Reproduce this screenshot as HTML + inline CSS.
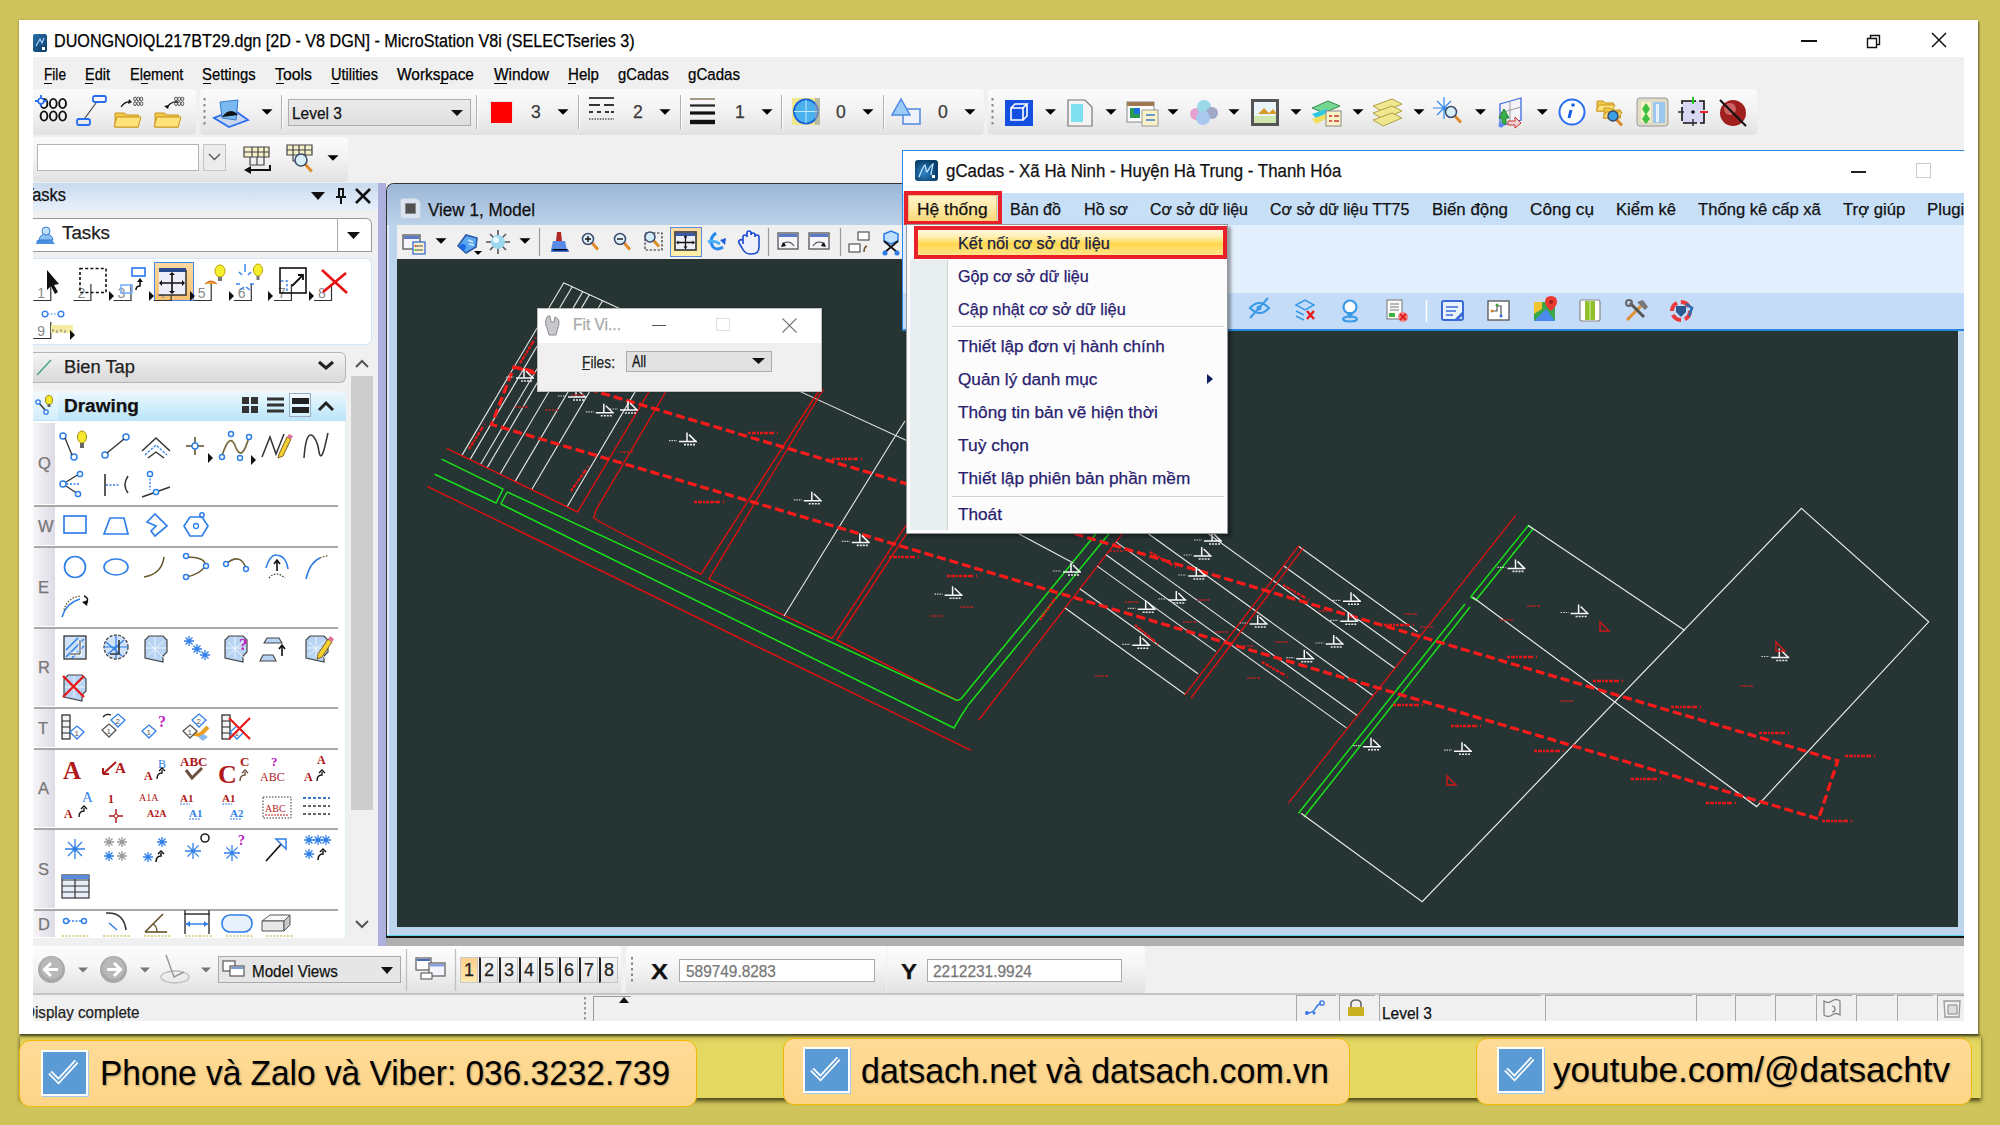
<!DOCTYPE html><html><head><meta charset="utf-8"><style>
html,body{margin:0;padding:0;}
body{width:2000px;height:1125px;position:relative;overflow:hidden;background:#cfc45b;font-family:"Liberation Sans",sans-serif;}
.r{position:absolute;box-sizing:border-box;}
.t{position:absolute;white-space:nowrap;line-height:1;}
svg.r{overflow:visible;}
</style></head><body>
<div class="r" style="left:20px;top:1034px;width:1961px;height:64px;background:#e3d862;box-shadow:inset 0 7px 6px -5px rgba(70,60,0,.55),0 3px 4px rgba(30,28,0,.75);"></div>
<div class="r" style="left:19px;top:20px;width:1959px;height:1014px;background:#fff;box-shadow:1px 2px 2px rgba(0,0,0,.55),-1px 0 2px rgba(0,0,0,.15);"></div>
<div class="r" style="left:33px;top:34px;width:14px;height:18px;background:linear-gradient(135deg,#2a6fa8,#0b3a66);border-radius:2px;"></div>
<div class="t" style="left:54.00px;top:31.64px;font-size:18.15px;color:#000;font-weight:400;font-family:'Liberation Sans',sans-serif;transform:scaleX(0.8903);transform-origin:0 0;-webkit-text-stroke:0.25px currentColor;">DUONGNOIQL217BT29.dgn [2D - V8 DGN] - MicroStation V8i (SELECTseries 3)</div>
<div class="r" style="left:33px;top:57px;width:1931px;height:964px;background:#f0f0f0;"></div>
<div class="r" style="left:1801px;top:40px;width:16px;height:2px;background:#111;"></div>
<svg class="r" style="left:1864px;top:31px;" width="20" height="20" viewBox="0 0 20 20"><path d="M3.5 7.5h9v9h-9z M6.5 7.5v-3h9v9h-3" fill="none" stroke="#111" stroke-width="1.4"/></svg>
<svg class="r" style="left:1929px;top:30px;" width="20" height="20" viewBox="0 0 20 20"><path d="M3 3L17 17M17 3L3 17" stroke="#111" stroke-width="1.5"/></svg>
<svg class="r" style="left:33px;top:34px;" width="14" height="18" viewBox="0 0 14 18"><path d="M3 12 L7 5 L9 9 L11 4" stroke="#9fd3ff" stroke-width="1.2" fill="none"/><rect x="9" y="13" width="3" height="3" fill="#fff"/></svg>
<div class="t" style="left:43.60px;top:66.50px;font-size:15.95px;color:#000;font-weight:400;font-family:'Liberation Sans',sans-serif;transform:scaleX(0.8560);transform-origin:0 0;-webkit-text-stroke:0.25px currentColor;">File</div>
<div class="t" style="left:85.00px;top:66.50px;font-size:15.95px;color:#000;font-weight:400;font-family:'Liberation Sans',sans-serif;transform:scaleX(0.9095);transform-origin:0 0;-webkit-text-stroke:0.25px currentColor;">Edit</div>
<div class="t" style="left:129.60px;top:66.50px;font-size:15.95px;color:#000;font-weight:400;font-family:'Liberation Sans',sans-serif;transform:scaleX(0.9126);transform-origin:0 0;-webkit-text-stroke:0.25px currentColor;">Element</div>
<div class="t" style="left:202.40px;top:66.50px;font-size:15.95px;color:#000;font-weight:400;font-family:'Liberation Sans',sans-serif;transform:scaleX(0.9300);transform-origin:0 0;-webkit-text-stroke:0.25px currentColor;">Settings</div>
<div class="t" style="left:275.00px;top:66.50px;font-size:15.95px;color:#000;font-weight:400;font-family:'Liberation Sans',sans-serif;transform:scaleX(0.9937);transform-origin:0 0;-webkit-text-stroke:0.25px currentColor;">Tools</div>
<div class="t" style="left:331.00px;top:66.50px;font-size:15.95px;color:#000;font-weight:400;font-family:'Liberation Sans',sans-serif;transform:scaleX(0.9144);transform-origin:0 0;-webkit-text-stroke:0.25px currentColor;">Utilities</div>
<div class="t" style="left:397.00px;top:66.50px;font-size:15.95px;color:#000;font-weight:400;font-family:'Liberation Sans',sans-serif;transform:scaleX(0.9687);transform-origin:0 0;-webkit-text-stroke:0.25px currentColor;">Workspace</div>
<div class="t" style="left:494.00px;top:66.50px;font-size:15.95px;color:#000;font-weight:400;font-family:'Liberation Sans',sans-serif;transform:scaleX(0.9695);transform-origin:0 0;-webkit-text-stroke:0.25px currentColor;">Window</div>
<div class="t" style="left:568.00px;top:66.50px;font-size:15.95px;color:#000;font-weight:400;font-family:'Liberation Sans',sans-serif;transform:scaleX(0.9450);transform-origin:0 0;-webkit-text-stroke:0.25px currentColor;">Help</div>
<div class="t" style="left:618.00px;top:66.50px;font-size:15.95px;color:#000;font-weight:400;font-family:'Liberation Sans',sans-serif;transform:scaleX(0.9276);transform-origin:0 0;-webkit-text-stroke:0.25px currentColor;">gCadas</div>
<div class="t" style="left:688.00px;top:66.50px;font-size:15.95px;color:#000;font-weight:400;font-family:'Liberation Sans',sans-serif;transform:scaleX(0.9458);transform-origin:0 0;-webkit-text-stroke:0.25px currentColor;">gCadas</div>
<div class="r" style="left:44px;top:83px;width:8px;height:1px;background:#000;"></div>
<div class="r" style="left:85px;top:83px;width:8px;height:1px;background:#000;"></div>
<div class="r" style="left:141px;top:83px;width:7px;height:1px;background:#000;"></div>
<div class="r" style="left:203px;top:83px;width:8px;height:1px;background:#000;"></div>
<div class="r" style="left:276px;top:83px;width:8px;height:1px;background:#000;"></div>
<div class="r" style="left:331px;top:83px;width:8px;height:1px;background:#000;"></div>
<div class="r" style="left:440px;top:83px;width:8px;height:1px;background:#000;"></div>
<div class="r" style="left:494px;top:83px;width:13px;height:1px;background:#000;"></div>
<div class="r" style="left:568px;top:83px;width:8px;height:1px;background:#000;"></div>
<div class="r" style="left:33px;top:89px;width:163px;height:46px;background:linear-gradient(#fbfbfb 0%,#f3f3f3 45%,#e2e2e2 100%);border-radius:4px;"></div>
<div class="r" style="left:200px;top:89px;width:784px;height:46px;background:linear-gradient(#fbfbfb 0%,#f3f3f3 45%,#e2e2e2 100%);border-radius:4px;"></div>
<div class="r" style="left:988px;top:89px;width:769px;height:46px;background:linear-gradient(#fbfbfb 0%,#f3f3f3 45%,#e2e2e2 100%);border-radius:4px;"></div>
<div class="r" style="left:33px;top:137px;width:315px;height:45px;background:linear-gradient(#fbfbfb 0%,#f3f3f3 45%,#e2e2e2 100%);border-radius:4px;"></div>
<svg class="r" style="left:0px;top:0px;left:0;top:0;" width="2000" height="140" viewBox="0 0 2000 140"><rect x="203.5" y="98" width="2" height="2.5" fill="#888"/><rect x="203.5" y="104" width="2" height="2.5" fill="#888"/><rect x="203.5" y="110" width="2" height="2.5" fill="#888"/><rect x="203.5" y="116" width="2" height="2.5" fill="#888"/><rect x="203.5" y="122" width="2" height="2.5" fill="#888"/><rect x="991.5" y="98" width="2" height="2.5" fill="#888"/><rect x="991.5" y="104" width="2" height="2.5" fill="#888"/><rect x="991.5" y="110" width="2" height="2.5" fill="#888"/><rect x="991.5" y="116" width="2" height="2.5" fill="#888"/><rect x="991.5" y="122" width="2" height="2.5" fill="#888"/><path d="M281.5 95V129" stroke="#b0b0b0" stroke-width="1"/><path d="M282.5 95V129" stroke="#fff" stroke-width="1"/><path d="M476.5 95V129" stroke="#b0b0b0" stroke-width="1"/><path d="M477.5 95V129" stroke="#fff" stroke-width="1"/><path d="M578.5 95V129" stroke="#b0b0b0" stroke-width="1"/><path d="M579.5 95V129" stroke="#fff" stroke-width="1"/><path d="M680.5 95V129" stroke="#b0b0b0" stroke-width="1"/><path d="M681.5 95V129" stroke="#fff" stroke-width="1"/><path d="M781.5 95V129" stroke="#b0b0b0" stroke-width="1"/><path d="M782.5 95V129" stroke="#fff" stroke-width="1"/><path d="M883.5 95V129" stroke="#b0b0b0" stroke-width="1"/><path d="M884.5 95V129" stroke="#fff" stroke-width="1"/><ellipse cx="44.0" cy="103.5" rx="3.4" ry="4.6" fill="none" stroke="#111" stroke-width="1.9"/><ellipse cx="44.0" cy="116.0" rx="3.4" ry="4.6" fill="none" stroke="#111" stroke-width="1.9"/><ellipse cx="53.3" cy="103.5" rx="3.4" ry="4.6" fill="none" stroke="#111" stroke-width="1.9"/><ellipse cx="53.3" cy="116.0" rx="3.4" ry="4.6" fill="none" stroke="#111" stroke-width="1.9"/><ellipse cx="62.6" cy="103.5" rx="3.4" ry="4.6" fill="none" stroke="#111" stroke-width="1.9"/><ellipse cx="62.6" cy="116.0" rx="3.4" ry="4.6" fill="none" stroke="#111" stroke-width="1.9"/><path d="M35 101h12M41 95v12" stroke="#2a6ef0" stroke-width="1.8"/><circle cx="41" cy="101" r="2.8" fill="#fff" stroke="#2a6ef0" stroke-width="1.6"/><rect x="93" y="96" width="13" height="6" rx="2" fill="none" stroke="#2a6ef0" stroke-width="1.8"/><rect x="77" y="119" width="13" height="6" rx="2" fill="none" stroke="#2a6ef0" stroke-width="1.8"/><path d="M85 118L96 103" stroke="#444" stroke-width="1.2"/><path d="M115 113h9.600000000000001l2 2h12.0v12h-23.6z" fill="#f2c64a" stroke="#c8961e" stroke-width="1"/><path d="M117 117h24l-3 10h-24z" fill="#ffe27a" stroke="#c8961e" stroke-width="1"/><ellipse cx="135.0" cy="99.0" rx="1.4" ry="1.9" fill="none" stroke="#333" stroke-width="0.81"/><ellipse cx="138.2" cy="99.0" rx="1.4" ry="1.9" fill="none" stroke="#333" stroke-width="0.81"/><ellipse cx="141.4" cy="99.0" rx="1.4" ry="1.9" fill="none" stroke="#333" stroke-width="0.81"/><ellipse cx="135.0" cy="103.7" rx="1.4" ry="1.9" fill="none" stroke="#333" stroke-width="0.81"/><ellipse cx="138.2" cy="103.7" rx="1.4" ry="1.9" fill="none" stroke="#333" stroke-width="0.81"/><ellipse cx="141.4" cy="103.7" rx="1.4" ry="1.9" fill="none" stroke="#333" stroke-width="0.81"/><path d="M121 107Q125 101 131 102" stroke="#111" stroke-width="1.3" fill="none"/><path d="M129 99l3 3l-4 2z" fill="#111"/><path d="M155 113h9.600000000000001l2 2h12.0v12h-23.6z" fill="#f2c64a" stroke="#c8961e" stroke-width="1"/><path d="M157 117h24l-3 10h-24z" fill="#ffe27a" stroke="#c8961e" stroke-width="1"/><ellipse cx="176.0" cy="99.0" rx="1.4" ry="1.9" fill="none" stroke="#333" stroke-width="0.81"/><ellipse cx="179.2" cy="99.0" rx="1.4" ry="1.9" fill="none" stroke="#333" stroke-width="0.81"/><ellipse cx="182.4" cy="99.0" rx="1.4" ry="1.9" fill="none" stroke="#333" stroke-width="0.81"/><ellipse cx="176.0" cy="103.7" rx="1.4" ry="1.9" fill="none" stroke="#333" stroke-width="0.81"/><ellipse cx="179.2" cy="103.7" rx="1.4" ry="1.9" fill="none" stroke="#333" stroke-width="0.81"/><ellipse cx="182.4" cy="103.7" rx="1.4" ry="1.9" fill="none" stroke="#333" stroke-width="0.81"/><path d="M178 102Q170 101 167 108" stroke="#111" stroke-width="1.3" fill="none"/><path d="M164 106l4 3l1-4z" fill="#111"/><path d="M214 118L229 127L248 120L234 110z" fill="#c9d8ee" stroke="#2a6ef0" stroke-width="1.8"/><path d="M220 102L238 100L236 120L222 118z" fill="#7ab8f0" stroke="#3a7ad0" stroke-width="1"/><path d="M222 117Q230 106 238 115z" fill="#111"/><path d="M261.5 109.2h11l-5.5 5.5z" fill="#000"/><path d="M557.5 109.2h11l-5.5 5.5z" fill="#000"/><path d="M659.5 109.2h11l-5.5 5.5z" fill="#000"/><path d="M761.5 109.2h11l-5.5 5.5z" fill="#000"/><path d="M862.5 109.2h11l-5.5 5.5z" fill="#000"/><path d="M964.5 109.2h11l-5.5 5.5z" fill="#000"/><path d="M1045.0 109.2h11l-5.5 5.5z" fill="#000"/><path d="M1105.5 109.2h11l-5.5 5.5z" fill="#000"/><path d="M1167.5 109.2h11l-5.5 5.5z" fill="#000"/><path d="M1228.5 109.2h11l-5.5 5.5z" fill="#000"/><path d="M1290.5 109.2h11l-5.5 5.5z" fill="#000"/><path d="M1352.5 109.2h11l-5.5 5.5z" fill="#000"/><path d="M1413.5 109.2h11l-5.5 5.5z" fill="#000"/><path d="M1475.0 109.2h11l-5.5 5.5z" fill="#000"/><path d="M1536.9 109.2h11l-5.5 5.5z" fill="#000"/></svg>
<div class="r" style="left:288px;top:99px;width:183px;height:27px;background:linear-gradient(#ececec,#dedede);border:1px solid #adadad;"></div>
<div class="t" style="left:292.00px;top:104.57px;font-size:17.05px;color:#111;font-weight:400;font-family:'Liberation Sans',sans-serif;transform:scaleX(0.9094);transform-origin:0 0;-webkit-text-stroke:0.25px currentColor;">Level 3</div>
<svg class="r" style="left:451px;top:110px;" width="12" height="6" viewBox="0 0 12 6"><path d="M0 0H12L6 6z" fill="#111"/></svg>
<div class="r" style="left:490px;top:101px;width:23px;height:23px;background:#f00;border:1px solid #e8e8e8;"></div>
<div class="t" style="left:531.00px;top:104.10px;font-size:17.6px;color:#3a3a3a;font-weight:400;font-family:'Liberation Sans',sans-serif;-webkit-text-stroke:0.25px currentColor;">3</div>
<div class="t" style="left:633.00px;top:104.10px;font-size:17.6px;color:#3a3a3a;font-weight:400;font-family:'Liberation Sans',sans-serif;-webkit-text-stroke:0.25px currentColor;">2</div>
<div class="t" style="left:735.00px;top:104.10px;font-size:17.6px;color:#3a3a3a;font-weight:400;font-family:'Liberation Sans',sans-serif;-webkit-text-stroke:0.25px currentColor;">1</div>
<div class="t" style="left:836.00px;top:104.10px;font-size:17.6px;color:#3a3a3a;font-weight:400;font-family:'Liberation Sans',sans-serif;-webkit-text-stroke:0.25px currentColor;">0</div>
<div class="t" style="left:938.00px;top:104.10px;font-size:17.6px;color:#3a3a3a;font-weight:400;font-family:'Liberation Sans',sans-serif;-webkit-text-stroke:0.25px currentColor;">0</div>
<svg class="r" style="left:0px;top:0px;left:0;top:0;" width="2000" height="190" viewBox="0 0 2000 190"><path d="M589 98h25" stroke="#333" stroke-width="1.8"/><path d="M589 105h11M604 105h10" stroke="#333" stroke-width="1.8"/><path d="M589 112h4M597 112h4M605 112h4M611 112h3" stroke="#333" stroke-width="1.8"/><path d="M589 119h25" stroke="#555" stroke-width="1.5" stroke-dasharray="1.5 1.2"/><path d="M690 99h25" stroke="#6a5a3a" stroke-width="1.2"/><path d="M690 105.5h25" stroke="#222" stroke-width="2.2"/><path d="M690 113h25" stroke="#111" stroke-width="3.2"/><path d="M690 122h25" stroke="#111" stroke-width="4.4"/><rect x="792" y="98" width="28" height="27" fill="#efe78c"/><circle cx="806" cy="111.5" r="12" fill="#4ab0ee" stroke="#1a62d8" stroke-width="2"/><path d="M806 100v23M794 111.5h24" stroke="#bfeaff" stroke-width="1"/><rect x="815" y="98" width="5" height="27" fill="#9aa0b0" opacity=".6"/><rect x="903" y="109" width="17" height="15" fill="#eef3fb" stroke="#5a8ee0" stroke-width="1.6"/><path d="M901 99L910 115H892z" fill="#9ccaf6" stroke="#4a8ae6" stroke-width="1.5"/><rect x="1005" y="100" width="28" height="26" fill="#1450e0"/><path d="M1011 108h12v12h-12z M1011 108l4-4h12l-4 4 M1023 120l4-4V104" fill="none" stroke="#fff" stroke-width="1.6"/><path d="M1068 100h17l7 7v19h-24z" fill="#f4f4f4" stroke="#777" stroke-width="1.2"/><path d="M1071 104h12v18h-12z" fill="#7fe0f0"/><rect x="1127" y="102" width="27" height="20" fill="#fdfdfd" stroke="#888" stroke-width="1"/><rect x="1127" y="102" width="27" height="4" fill="#a07850"/><rect x="1130" y="108" width="10" height="10" fill="#2a9a50"/><rect x="1134" y="108" width="6" height="6" fill="#1a70e0"/><rect x="1142" y="110" width="16" height="16" fill="#fbf3c8" stroke="#999" stroke-width="1"/><path d="M1146 115h9M1146 120h9" stroke="#3a7ad0" stroke-width="1.5"/><circle cx="1196" cy="114" r="6" fill="#e6a0d0"/><circle cx="1204" cy="107" r="7" fill="#9ad8e8"/><circle cx="1212" cy="113" r="6" fill="#a0a8c8"/><circle cx="1203" cy="118" r="7" fill="#a8c8f0"/><rect x="1251" y="99" width="28" height="27" fill="#555"/><path d="M1254 102h22v21h-22z" fill="#e8f4f8"/><path d="M1258 114l6-6l5 5l4-4l4 5z" fill="#d89a2a"/><path d="M1254 116h22v7h-22z" fill="#d0e8b0"/><path d="M1312 108L1328 101L1340 106L1324 113z" fill="#72d890" stroke="#3a8a50" stroke-width="1"/><path d="M1312 114L1326 109L1330 112L1316 118z" fill="#30c8e0"/><path d="M1312 119L1326 114L1330 117L1316 124z" fill="#f0e060"/><rect x="1326" y="111" width="15" height="15" fill="#fbf3c8" stroke="#888" stroke-width="1"/><path d="M1329 116h3M1334 116h5M1329 121h3M1334 121h5" stroke="#c33" stroke-width="1.5"/><path d="M1373 106L1392 99L1402 104L1383 112z" fill="#f0e890" stroke="#b0a040" stroke-width="1"/><path d="M1373 113L1392 106L1402 111L1383 119z" fill="#f0e890" stroke="#b0a040" stroke-width="1"/><path d="M1373 120L1392 113L1402 118L1383 126z" fill="#f0e890" stroke="#b0a040" stroke-width="1"/><path d="M1444 97v22M1433 108h22M1437 101l14 14M1451 101l-14 14" stroke="#2a8af0" stroke-width="1.2"/><line x1="1454.8" y1="115.8" x2="1460.9" y2="122.5" stroke="#e08a2a" stroke-width="3"/><circle cx="1451" cy="112" r="5.5" fill="#d8eef8" stroke="#3a4a6a" stroke-width="1.5"/><path d="M1500 104L1521 98V120L1500 126z" fill="#f4f4f8" stroke="#3a6ae0" stroke-width="1.3"/><path d="M1510 101v22M1500 113l21-6" stroke="#999" stroke-width="1"/><path d="M1499 118l5-9l5 9h-3v6h-4v-6z" fill="#3ab04a" stroke="#1a7a2a" stroke-width="1"/><path d="M1508 121h7l0-4l6 6l-6 5v-3h-7z" fill="#f0d0d0" stroke="#c33" stroke-width="1"/><circle cx="1501" cy="125" r="2.5" fill="#5a8af0"/><circle cx="1572" cy="112" r="12.5" fill="#fff" stroke="#2a6ef0" stroke-width="2"/><path d="M1571 110l-2 8" stroke="#1a5ae0" stroke-width="3"/><circle cx="1573" cy="105" r="1.8" fill="#1a5ae0"/><path d="M1597 101h6.4l2 2h8.0v8h-16.4z" fill="#f2c64a" stroke="#c8961e" stroke-width="1"/><path d="M1599 105h16l-3 6h-16z" fill="#ffe27a" stroke="#c8961e" stroke-width="1"/><path d="M1604 108h6.4l2 2h8.0v8h-16.4z" fill="#f2c64a" stroke="#c8961e" stroke-width="1"/><path d="M1606 112h16l-3 6h-16z" fill="#ffe27a" stroke="#c8961e" stroke-width="1"/><line x1="1616.5" y1="119.5" x2="1622.0" y2="125.5" stroke="#e08a2a" stroke-width="3"/><circle cx="1613" cy="116" r="5" fill="#3aa0e8" stroke="#3a4a6a" stroke-width="1.5"/><rect x="1637" y="98" width="31" height="28" rx="3" fill="#e0dcc8" stroke="#999" stroke-width="1"/><path d="M1641 102h10v20h-10z" fill="#f8f2c8"/><path d="M1646 103l-4 6l4 6l4-6z M1646 113l-4 6l4 5l4-5z" fill="#40c040"/><rect x="1653" y="102" width="12" height="21" fill="#9cc8f0"/><rect x="1656" y="104" width="3" height="18" fill="#e8f2fc"/><rect x="1682" y="101" width="22" height="22" fill="#d8d8f4" stroke="#111" stroke-width="1.6" stroke-dasharray="14 3"/><path d="M1693 97v7" stroke="#2c2" stroke-width="2"/><path d="M1700 112h8" stroke="#e22" stroke-width="2"/><path d="M1678 112h6M1693 119v7" stroke="#333" stroke-width="1.5"/><circle cx="1693" cy="112" r="1.8" fill="#111"/><circle cx="1733" cy="113" r="13" fill="#a02020"/><circle cx="1730" cy="109" r="6" fill="#e08080" opacity=".7"/><path d="M1720 100L1746 126" stroke="#111" stroke-width="2.2"/><path d="M244 147h25v10h-25z" fill="#f4f0c8" stroke="#444" stroke-width="1.2"/><path d="M250 157v8h14v-8M252 147v10M258 147v10M264 147v10M244 152h25M257 157v8" stroke="#444" stroke-width="1.2" fill="none"/><path d="M270 165v5h-20" stroke="#111" stroke-width="2" fill="none"/><path d="M244 170l7-4v8z" fill="#111"/><path d="M287 145h25v10h-25z" fill="#f4f0c8" stroke="#444" stroke-width="1.2"/><path d="M293 145v10M299 145v10M305 145v10M287 150h25M293 155v6h6" stroke="#444" stroke-width="1.2" fill="none"/><line x1="305.2" y1="164.2" x2="311.8" y2="171.4" stroke="#e08a2a" stroke-width="3"/><circle cx="301" cy="160" r="6" fill="#d8eef8" stroke="#3a4a6a" stroke-width="1.5"/><path d="M327.5 155.2h11l-5.5 5.5z" fill="#000"/></svg>
<div class="r" style="left:37px;top:144px;width:162px;height:27px;background:#fff;border:1px solid #b4b4b4;"></div>
<div class="r" style="left:203px;top:144px;width:23px;height:27px;background:#ececec;border:1px solid #c4c4c4;"></div>
<svg class="r" style="left:208px;top:153px;" width="13" height="8" viewBox="0 0 13 8"><path d="M1 1L6.5 6.5L12 1" stroke="#555" stroke-width="1.3" fill="none"/></svg>
<div class="r" style="left:33px;top:183px;width:345px;height:27px;background:linear-gradient(#c9daee,#e6f0fa);"></div>
<div class="r" style="left:33px;top:184px;width:60px;height:26px;overflow:hidden;"><div class="t" style="left:-9.00px;top:3.10px;font-size:17.6px;color:#111;font-weight:400;font-family:'Liberation Sans',sans-serif;transform:scaleX(0.9335);transform-origin:0 0;-webkit-text-stroke:0.25px currentColor;">Tasks</div></div>
<svg class="r" style="left:311px;top:192px;" width="14" height="8" viewBox="0 0 14 8"><path d="M0 0H14L7 8z" fill="#111"/></svg>
<svg class="r" style="left:334px;top:187px;" width="14" height="18" viewBox="0 0 14 18"><path d="M4 2h6M5 2v8h4V2M2 10h10M7 10v7" stroke="#111" stroke-width="2" fill="none"/></svg>
<svg class="r" style="left:355px;top:188px;" width="16" height="16" viewBox="0 0 16 16"><path d="M1 1L15 15M15 1L1 15" stroke="#111" stroke-width="2.6"/></svg>
<div class="r" style="left:33px;top:218px;width:339px;height:34px;background:#fff;border:1px solid #999;border-left:none;border-radius:0 6px 0 0;"></div>
<div class="r" style="left:337px;top:219px;width:1px;height:32px;background:#aaa;"></div>
<svg class="r" style="left:347px;top:232px;" width="13" height="7" viewBox="0 0 13 7"><path d="M0 0H13L6.5 7z" fill="#111"/></svg>
<div class="t" style="left:62.00px;top:225.10px;font-size:17.6px;color:#222;font-weight:400;font-family:'Liberation Sans',sans-serif;transform:scaleX(1.0669);transform-origin:0 0;-webkit-text-stroke:0.25px currentColor;">Tasks</div>
<svg class="r" style="left:35px;top:224px;" width="22" height="22" viewBox="0 0 22 22"><path d="M2 16h15l3 4H1z" fill="#4a90e0"/><path d="M4 16q1-6 7-6t7 6z" fill="#8cc0f0" stroke="#3a7fd0" stroke-width="1"/><circle cx="11" cy="7" r="4" fill="#bfe0fa" stroke="#3a7fd0"/></svg>
<div class="r" style="left:33px;top:258px;width:339px;height:87px;background:#fff;border:1px solid #d4e6f6;border-left:none;border-radius:0 6px 6px 0;"></div>
<div class="r" style="left:33px;top:352px;width:313px;height:31px;background:linear-gradient(#f4f4f4,#e6e6e6 50%,#d9d9d9);border:1px solid #b5b5b5;border-left:none;border-radius:0 6px 6px 0;"></div>
<div class="t" style="left:64.00px;top:357.64px;font-size:18.15px;color:#222;font-weight:400;font-family:'Liberation Sans',sans-serif;transform:scaleX(1.0099);transform-origin:0 0;-webkit-text-stroke:0.25px currentColor;">Bien Tap</div>
<svg class="r" style="left:36px;top:358px;" width="16" height="18" viewBox="0 0 16 18"><path d="M1 17L15 2" stroke="#4aa88a" stroke-width="1.6"/></svg>
<svg class="r" style="left:318px;top:361px;" width="16" height="11" viewBox="0 0 16 11"><path d="M1 1L8 7L15 1" stroke="#222" stroke-width="3" fill="none"/></svg>
<div class="r" style="left:348px;top:352px;width:28px;height:592px;background:#f0f0f0;"></div>
<div class="r" style="left:351px;top:376px;width:22px;height:434px;background:#cdcdcd;"></div>
<svg class="r" style="left:355px;top:359px;" width="14" height="9" viewBox="0 0 14 9"><path d="M1 8L7 2L13 8" stroke="#555" stroke-width="2" fill="none"/></svg>
<svg class="r" style="left:355px;top:920px;" width="14" height="9" viewBox="0 0 14 9"><path d="M1 1L7 7L13 1" stroke="#555" stroke-width="2" fill="none"/></svg>
<div class="r" style="left:33px;top:391px;width:313px;height:30px;background:linear-gradient(#eef8fe,#d3effc 50%,#b9e3f8);border-radius:0 6px 0 0;"></div>
<div class="r" style="left:33px;top:392px;width:25px;height:28px;background:rgba(255,255,255,.35);"></div>
<svg class="r" style="left:35px;top:394px;" width="22" height="24" viewBox="0 0 22 24"><path d="M3 8L11 17" stroke="#333" stroke-width="1.4"/><circle cx="3" cy="8" r="2.2" fill="#fff" stroke="#2f7fe8" stroke-width="1.3"/><circle cx="11" cy="18" r="2.2" fill="#fff" stroke="#2f7fe8" stroke-width="1.3"/><ellipse cx="14" cy="6" rx="3.5" ry="4.5" fill="#f6e830" stroke="#a09000"/><rect x="12.5" y="10" width="3" height="3" fill="#666"/></svg>
<div class="t" style="left:64.00px;top:396.64px;font-size:18.15px;color:#111;font-weight:700;font-family:'Liberation Sans',sans-serif;transform:scaleX(1.0475);transform-origin:0 0;-webkit-text-stroke:0.25px currentColor;">Drawing</div>
<svg class="r" style="left:241px;top:396px;" width="19" height="19" viewBox="0 0 19 19"><rect x="1" y="1" width="7" height="7" fill="#333"/><rect x="10" y="1" width="7" height="7" fill="#333"/><rect x="1" y="10" width="7" height="7" fill="#333"/><rect x="10" y="10" width="7" height="7" fill="#333"/></svg>
<svg class="r" style="left:266px;top:396px;" width="19" height="19" viewBox="0 0 19 19"><path d="M1 3h17M1 9h17M1 15h17" stroke="#333" stroke-width="3"/></svg>
<div class="r" style="left:289px;top:393px;width:22px;height:24px;border:1px solid #9ab;background:rgba(255,255,255,.3);"></div>
<svg class="r" style="left:292px;top:397px;" width="17" height="17" viewBox="0 0 17 17"><rect x="0" y="1" width="17" height="6" fill="#222"/><rect x="0" y="10" width="17" height="6" fill="#222"/></svg>
<svg class="r" style="left:318px;top:400px;" width="16" height="11" viewBox="0 0 16 11"><path d="M1 10L8 3L15 10" stroke="#222" stroke-width="3" fill="none"/></svg>
<div class="r" style="left:33px;top:421px;width:313px;height:517px;background:#fff;border-right:1px solid #e0eef8;"></div>
<div class="r" style="left:33px;top:423px;width:22px;height:81px;background:linear-gradient(90deg,#f6f5f8,#dedbe5);"></div>
<div class="t" style="left:38.00px;top:455.03px;font-size:16.5px;color:#777;font-weight:400;font-family:'Liberation Sans',sans-serif;-webkit-text-stroke:0.25px currentColor;">Q</div>
<div class="r" style="left:34px;top:505px;width:304px;height:2px;background:#a8a8a8;"></div>
<div class="r" style="left:33px;top:507px;width:22px;height:38px;background:linear-gradient(90deg,#f6f5f8,#dedbe5);"></div>
<div class="t" style="left:38.00px;top:517.53px;font-size:16.5px;color:#777;font-weight:400;font-family:'Liberation Sans',sans-serif;-webkit-text-stroke:0.25px currentColor;">W</div>
<div class="r" style="left:34px;top:546px;width:304px;height:2px;background:#a8a8a8;"></div>
<div class="r" style="left:33px;top:548px;width:22px;height:78px;background:linear-gradient(90deg,#f6f5f8,#dedbe5);"></div>
<div class="t" style="left:38.00px;top:578.53px;font-size:16.5px;color:#777;font-weight:400;font-family:'Liberation Sans',sans-serif;-webkit-text-stroke:0.25px currentColor;">E</div>
<div class="r" style="left:34px;top:627px;width:304px;height:2px;background:#a8a8a8;"></div>
<div class="r" style="left:33px;top:629px;width:22px;height:77px;background:linear-gradient(90deg,#f6f5f8,#dedbe5);"></div>
<div class="t" style="left:38.00px;top:659.03px;font-size:16.5px;color:#777;font-weight:400;font-family:'Liberation Sans',sans-serif;-webkit-text-stroke:0.25px currentColor;">R</div>
<div class="r" style="left:34px;top:707px;width:304px;height:2px;background:#a8a8a8;"></div>
<div class="r" style="left:33px;top:709px;width:22px;height:38px;background:linear-gradient(90deg,#f6f5f8,#dedbe5);"></div>
<div class="t" style="left:38.00px;top:719.53px;font-size:16.5px;color:#777;font-weight:400;font-family:'Liberation Sans',sans-serif;-webkit-text-stroke:0.25px currentColor;">T</div>
<div class="r" style="left:34px;top:748px;width:304px;height:2px;background:#a8a8a8;"></div>
<div class="r" style="left:33px;top:750px;width:22px;height:77px;background:linear-gradient(90deg,#f6f5f8,#dedbe5);"></div>
<div class="t" style="left:38.00px;top:780.03px;font-size:16.5px;color:#777;font-weight:400;font-family:'Liberation Sans',sans-serif;-webkit-text-stroke:0.25px currentColor;">A</div>
<div class="r" style="left:34px;top:828px;width:304px;height:2px;background:#a8a8a8;"></div>
<div class="r" style="left:33px;top:830px;width:22px;height:78px;background:linear-gradient(90deg,#f6f5f8,#dedbe5);"></div>
<div class="t" style="left:38.00px;top:860.53px;font-size:16.5px;color:#777;font-weight:400;font-family:'Liberation Sans',sans-serif;-webkit-text-stroke:0.25px currentColor;">S</div>
<div class="r" style="left:34px;top:909px;width:304px;height:2px;background:#a8a8a8;"></div>
<div class="r" style="left:33px;top:911px;width:22px;height:26px;background:linear-gradient(90deg,#f6f5f8,#dedbe5);"></div>
<div class="t" style="left:38.00px;top:915.53px;font-size:16.5px;color:#777;font-weight:400;font-family:'Liberation Sans',sans-serif;-webkit-text-stroke:0.25px currentColor;">D</div>
<div class="r" style="left:33px;top:938px;width:343px;height:7px;background:#f0f0f0;"></div>
<div class="r" style="left:378px;top:183px;width:8px;height:763px;background:#adafdc;"></div>
<div class="r" style="left:154px;top:262px;width:40px;height:39px;background:linear-gradient(#fbd9a0,#f6bf70);border:1.5px solid #4a86e8;"></div>
<svg class="r" style="left:0px;top:0px;left:0;top:0;" width="400" height="400" viewBox="0 0 400 400"><text x="37.3" y="298" font-family="Liberation Sans" font-size="14" fill="#8a8a8a">1</text><path d="M33.3 300.5h17.5V284" stroke="#333" stroke-width="1.2" fill="none"/><text x="77.4" y="298" font-family="Liberation Sans" font-size="14" fill="#8a8a8a">2</text><path d="M73.4 300.5h17.5V284" stroke="#333" stroke-width="1.2" fill="none"/><text x="117.5" y="298" font-family="Liberation Sans" font-size="14" fill="#8a8a8a">3</text><path d="M113.5 300.5h17.5V284" stroke="#333" stroke-width="1.2" fill="none"/><text x="157.60000000000002" y="298" font-family="Liberation Sans" font-size="14" fill="#8a8a8a">4</text><path d="M153.60000000000002 300.5h17.5V284" stroke="#333" stroke-width="1.2" fill="none"/><text x="197.7" y="298" font-family="Liberation Sans" font-size="14" fill="#8a8a8a">5</text><path d="M193.7 300.5h17.5V284" stroke="#333" stroke-width="1.2" fill="none"/><text x="237.8" y="298" font-family="Liberation Sans" font-size="14" fill="#8a8a8a">6</text><path d="M233.8 300.5h17.5V284" stroke="#333" stroke-width="1.2" fill="none"/><text x="277.90000000000003" y="298" font-family="Liberation Sans" font-size="14" fill="#8a8a8a">7</text><path d="M273.90000000000003 300.5h17.5V284" stroke="#333" stroke-width="1.2" fill="none"/><text x="318.0" y="298" font-family="Liberation Sans" font-size="14" fill="#8a8a8a">8</text><path d="M314.0 300.5h17.5V284" stroke="#333" stroke-width="1.2" fill="none"/><path d="M47 270L47 290L51 286L55 294L58 292L54 285L59 284z" fill="#111"/><rect x="80" y="268.5" width="26" height="24" fill="none" stroke="#111" stroke-width="1.6" stroke-dasharray="3 2.2"/><path d="M109 291l5 5l-5 5z" fill="#111"/><rect x="132" y="268" width="13" height="8" fill="none" stroke="#3a86f0" stroke-width="1.8"/><rect x="121" y="285" width="11" height="8" fill="none" stroke="#7ab0f8" stroke-width="1.6"/><path d="M136 290q0-4 4-4v-6" stroke="#111" stroke-width="1.6" fill="none"/><path d="M137 282l3-4l3 4z" fill="#111"/><path d="M149 291l5 5l-5 5z" fill="#111"/><rect x="159" y="268" width="27" height="27" fill="#eeeef8"/><rect x="159" y="268" width="27" height="4" fill="#2a4a90"/><path d="M172 274v18M161 283h22" stroke="#111" stroke-width="1.6"/><path d="M172 272l-3 3h6zM172 294l-3-3h6zM159 283l3-3v6zM185 283l-3-3v6z" fill="#111"/><path d="M186 270v25h-27" stroke="#333" stroke-width="1.5" fill="none"/><path d="M190 291l5 5l-5 5z" fill="#111"/><path d="M205 284q6-6 12 0" fill="#f0a030" stroke="#d06020" stroke-width="1"/><ellipse cx="220" cy="271" rx="5" ry="6" fill="#f4f030" stroke="#c0a000"/><rect x="218" y="277" width="4" height="4" fill="#777"/><path d="M229 291l5 5l-5 5z" fill="#111"/><path d="M245 264v8M239 272l3 3M251 272l-3 3M240 290l4-3M250 290l-4-3M236 284h4M250 284h4" stroke="#3a86f0" stroke-width="1.5"/><ellipse cx="258" cy="270" rx="4.5" ry="6" fill="#f4f030" stroke="#c0a000"/><rect x="256.5" y="276" width="3" height="4" fill="#777"/><path d="M268 291l5 5l-5 5z" fill="#111"/><rect x="280" y="268" width="26" height="25" fill="none" stroke="#111" stroke-width="1.6"/><path d="M292 286l11-11M298 275h5v5" stroke="#111" stroke-width="1.8" fill="none"/><path d="M281 281h6v12" stroke="#3a86f0" stroke-width="1.5" stroke-dasharray="2.5 2" fill="none"/><path d="M309 291l5 5l-5 5z" fill="#111"/><path d="M322 270L347 293M346 273L323 292" stroke="#e81010" stroke-width="2.6"/><text x="37.3" y="336" font-family="Liberation Sans" font-size="14" fill="#8a8a8a">9</text><path d="M33.3 338.5h17.5V322" stroke="#333" stroke-width="1.2" fill="none"/><path d="M51 333h22v-8h-22z" fill="#f4eca0"/><path d="M53 329v3M57 330v3M61 329v3M65 330v3" stroke="#777" stroke-width="1"/><circle cx="45" cy="314" r="2.8" fill="none" stroke="#3a86f0" stroke-width="1.4"/><circle cx="61" cy="314" r="2.8" fill="none" stroke="#3a86f0" stroke-width="1.4"/><path d="M48 314h10" stroke="#3a86f0" stroke-width="1.2" stroke-dasharray="1.5 1.5"/><path d="M70 330l5 5l-5 5z" fill="#111"/></svg>
<svg class="r" style="left:0px;top:0px;left:0;top:0;" width="400" height="1000" viewBox="0 0 400 1000"><circle cx="63" cy="436" r="3" fill="#fff" stroke="#2f7fe8" stroke-width="1.5"/><circle cx="74" cy="457" r="3" fill="#fff" stroke="#2f7fe8" stroke-width="1.5"/><path d="M65 438L72 455" stroke="#333" stroke-width="1.3"/><ellipse cx="82" cy="437" rx="4.5" ry="6" fill="#f6e830" stroke="#a09000"/><rect x="80" y="443" width="4" height="5" fill="#666"/><circle cx="105" cy="455" r="3" fill="#fff" stroke="#2f7fe8" stroke-width="1.5"/><circle cx="126" cy="437" r="3" fill="#fff" stroke="#2f7fe8" stroke-width="1.5"/><path d="M107 453L124 439" stroke="#333" stroke-width="1.4"/><path d="M142 451L156 438L170 451" stroke="#333" stroke-width="1.5" fill="none"/><path d="M145 455L156 445L167 455" stroke="#2f7fe8" stroke-width="1.3" stroke-dasharray="2.5 1.5" fill="none"/><path d="M148 458L156 452L164 458" stroke="#333" stroke-width="1.4" fill="none"/><path d="M186 446h18M195 437v18" stroke="#5a4a20" stroke-width="1.5"/><circle cx="195" cy="446" r="3" fill="#fff" stroke="#2f7fe8" stroke-width="1.4"/><path d="M208 453l5 5l-5 5z" fill="#111"/><path d="M222 456Q230 430 236 448Q242 462 249 437" stroke="#7a6a40" stroke-width="1.8" fill="none"/><circle cx="222" cy="457" r="2.5" fill="#fff" stroke="#2f7fe8" stroke-width="1.5"/><circle cx="231" cy="434" r="2.5" fill="#fff" stroke="#2f7fe8" stroke-width="1.5"/><circle cx="249" cy="437" r="2.5" fill="#fff" stroke="#2f7fe8" stroke-width="1.5"/><circle cx="240" cy="458" r="2.5" fill="#fff" stroke="#2f7fe8" stroke-width="1.5"/><path d="M251 455l5 5l-5 5z" fill="#111"/><path d="M262 457L270 437L276 454L284 434" stroke="#333" stroke-width="1.5" fill="none"/><path d="M279 454l8-17l4 2l-8 17l-5 2z" fill="#f4d030" stroke="#806020" stroke-width="1"/><path d="M287 437l2-3l4 2l-2 3z" fill="#e070a0"/><path d="M304 458Q306 430 313 436Q318 442 319 452Q321 462 325 446L328 433" stroke="#333" stroke-width="1.5" fill="none"/><path d="M63 484L79 474M63 484L78 494" stroke="#333" stroke-width="1.3"/><path d="M63 484h17" stroke="#2f7fe8" stroke-width="1.3" stroke-dasharray="2 1.5"/><circle cx="63" cy="484" r="3" fill="#fff" stroke="#2f7fe8" stroke-width="1.5"/><circle cx="80" cy="474" r="2.6" fill="#fff" stroke="#2f7fe8" stroke-width="1.5"/><circle cx="78" cy="494" r="2.6" fill="#fff" stroke="#2f7fe8" stroke-width="1.5"/><path d="M105 474v22" stroke="#333" stroke-width="1.6"/><path d="M106 485h13" stroke="#2f7fe8" stroke-width="1.3" stroke-dasharray="2 1.5"/><path d="M128 476q-6 9 0 17" stroke="#333" stroke-width="1.5" fill="none"/><path d="M150 475v15" stroke="#2f7fe8" stroke-width="1.3" stroke-dasharray="2 1.5"/><path d="M142 497L170 487" stroke="#333" stroke-width="1.4"/><circle cx="150" cy="474" r="2.6" fill="#fff" stroke="#2f7fe8" stroke-width="1.5"/><circle cx="156" cy="492" r="2.6" fill="#fff" stroke="#2f7fe8" stroke-width="1.5"/><rect x="64" y="516" width="22" height="17" fill="#fff" stroke="#2f7fe8" stroke-width="1.7"/><path d="M104 534L110 518H124L128 534z" fill="#fff" stroke="#2f7fe8" stroke-width="1.7"/><path d="M147 522L155 514L167 526L155 536L151 531L156 526z" fill="#fff" stroke="#2f7fe8" stroke-width="1.7"/><path d="M190 517L202 517L208 526L202 536L190 536L184 526z" fill="#fff" stroke="#2f7fe8" stroke-width="1.7"/><circle cx="196" cy="526" r="2.5" fill="none" stroke="#2f7fe8" stroke-width="1.3"/><circle cx="202" cy="515" r="2.2" fill="#fff" stroke="#2f7fe8" stroke-width="1.5"/><circle cx="75" cy="567" r="10.5" fill="#fff" stroke="#2f7fe8" stroke-width="1.7"/><ellipse cx="116" cy="567" rx="12" ry="8" fill="#fff" stroke="#2f7fe8" stroke-width="1.7"/><path d="M144 577Q162 574 164 557" stroke="#6a5a30" stroke-width="1.6" fill="none"/><path d="M185 557Q207 557 205 566Q201 574 186 577" stroke="#6a5a30" stroke-width="1.6" fill="none"/><circle cx="186" cy="556" r="2.5" fill="#fff" stroke="#2f7fe8" stroke-width="1.5"/><circle cx="206" cy="566" r="2.5" fill="#fff" stroke="#2f7fe8" stroke-width="1.5"/><circle cx="186" cy="577" r="2.5" fill="#fff" stroke="#2f7fe8" stroke-width="1.5"/><path d="M226 564Q240 552 246 568" stroke="#6a5a30" stroke-width="1.6" fill="none"/><circle cx="226" cy="564" r="2.4" fill="#fff" stroke="#2f7fe8" stroke-width="1.5"/><circle cx="246" cy="569" r="2.4" fill="#fff" stroke="#2f7fe8" stroke-width="1.5"/><path d="M266 568Q270 554 277 555Q286 556 288 569" stroke="#2f7fe8" stroke-width="1.6" fill="none"/><path d="M269 578Q276 570 285 578" stroke="#333" stroke-width="1.2" stroke-dasharray="1.5 1.5" fill="none"/><path d="M277 571v-10M274 564l3-4l3 4" stroke="#111" stroke-width="1.6" fill="none"/><path d="M306 579Q310 562 320 558" stroke="#2f7fe8" stroke-width="1.6" fill="none"/><path d="M320 558q4-2 8-2" stroke="#6a5a30" stroke-width="1.3" stroke-dasharray="1.5 1.5" fill="none"/><path d="M62 617Q66 603 80 599" stroke="#2f7fe8" stroke-width="1.6" fill="none"/><path d="M64 610Q67 598 80 596" stroke="#6a5a30" stroke-width="1.3" stroke-dasharray="1.5 1.5" fill="none"/><path d="M84 596q6 2 2 8" stroke="#111" stroke-width="1.5" fill="none"/><path d="M82 602l5 4l1-6z" fill="#111"/><rect x="64" y="636" width="22" height="23" fill="#cfe2f8" stroke="#333" stroke-width="1.3"/><path d="M66 650l12-12M66 657l18-18M72 658l12-12" stroke="#2f7fe8" stroke-width="1.5"/><path d="M70 654h10v-14" stroke="#fff" stroke-width="3" fill="none"/><path d="M70 654h10v-14" stroke="#333" stroke-width="1" fill="none"/><circle cx="116" cy="647" r="12" fill="#cfe2f8" stroke="#444" stroke-width="1.3" stroke-dasharray="3 1.5"/><path d="M106 642l16 14M108 654l16-14M116 636v22M104 647h24" stroke="#2f7fe8" stroke-width="1.2"/><path d="M110 654h9v-14" stroke="#333" stroke-width="1.6" fill="none"/><path d="M145 658V640l4-4h14l4 4v12l-4 4v6z" fill="#b8d4f4" stroke="#444" stroke-width="1.2"/><path d="M148 642l16 16M148 655l16 -14M155 637v21M146 648h20" stroke="#fff" stroke-width="1" opacity=".8"/><path d="M184 641h10M189 636v10M185.5 637.5l7.0 7.0M192.5 637.5l-7.0 7.0" stroke="#2f7fe8" stroke-width="1.3"/><path d="M192 649h10M197 644v10M193.5 645.5l7.0 7.0M200.5 645.5l-7.0 7.0" stroke="#2f7fe8" stroke-width="1.3"/><path d="M200 655h10M205 650v10M201.5 651.5l7.0 7.0M208.5 651.5l-7.0 7.0" stroke="#2f7fe8" stroke-width="1.3"/><path d="M225 658V640l4-4h14l4 4v12l-4 4v6z" fill="#b8d4f4" stroke="#444" stroke-width="1.2"/><path d="M228 642l16 16M228 655l16 -14M235 637v21M226 648h20" stroke="#fff" stroke-width="1" opacity=".8"/><text x="239" y="650" font-family="Liberation Serif" font-weight="700" font-size="17" fill="#c020c0">?</text><path d="M264 643l3-5h12l3 5z M260 661l3-6h10l3 6z" fill="#b8d4f4" stroke="#444" stroke-width="1.1"/><path d="M282 656v-10M279 649l3-4l3 4" stroke="#111" stroke-width="1.6" fill="none"/><path d="M306 658V640l4-4h14l4 4v12l-4 4v6z" fill="#b8d4f4" stroke="#444" stroke-width="1.2"/><path d="M309 642l16 16M309 655l16 -14M316 637v21M307 648h20" stroke="#fff" stroke-width="1" opacity=".8"/><path d="M318 654l10-15l4 3l-10 15l-5 2z" fill="#f4d030" stroke="#806020" stroke-width="1"/><path d="M328 639l2-3l4 3l-2 3z" fill="#e070a0"/><path d="M64 697V679l4-4h14l4 4v12l-4 4v6z" fill="#b8d4f4" stroke="#444" stroke-width="1.2"/><path d="M67 681l16 16M67 694l16 -14M74 676v21M65 687h20" stroke="#fff" stroke-width="1" opacity=".8"/><path d="M63 676L84 697M84 676L63 697" stroke="#e81818" stroke-width="2.4"/><rect x="62" y="715" width="8" height="24" fill="#f4f4f4" stroke="#222" stroke-width="1.2"/><path d="M62 721h8M62 727h8M62 733h8" stroke="#222" stroke-width="1"/><path d="M70 732l7-6l7 6l-7 7z" fill="#fff" stroke="#2f7fe8" stroke-width="1.3"/><text x="74.5" y="736" font-family="Liberation Sans" font-size="8" fill="#555">1</text><path d="M102 730l7-6l7 6l-7 7z" fill="#fff" stroke="#555" stroke-width="1.3"/><text x="106.5" y="734" font-family="Liberation Sans" font-size="8" fill="#555">1</text><path d="M111 720l7-6l7 6l-7 7z" fill="#fff" stroke="#2f7fe8" stroke-width="1.3"/><text x="115.5" y="724" font-family="Liberation Sans" font-size="8" fill="#555">2</text><path d="M103 717q3-4 8-2" stroke="#111" stroke-width="1.3" fill="none"/><path d="M142 731l7-6l7 6l-7 7z" fill="#fff" stroke="#2f7fe8" stroke-width="1.3"/><text x="146.5" y="735" font-family="Liberation Sans" font-size="8" fill="#555">1</text><text x="158" y="727" font-family="Liberation Serif" font-weight="700" font-size="16" fill="#c020c0">?</text><path d="M190 733l10 2l8-8" stroke="#e8a020" stroke-width="4" fill="none"/><path d="M183 731l7-6l7 6l-7 7z" fill="#fff" stroke="#555" stroke-width="1.3"/><text x="187.5" y="735" font-family="Liberation Sans" font-size="8" fill="#555">1</text><path d="M192 720l7-6l7 6l-7 7z" fill="#fff" stroke="#2f7fe8" stroke-width="1.3"/><text x="196.5" y="724" font-family="Liberation Sans" font-size="8" fill="#555">2</text><path d="M198 737l5 4l5-4l-5-3z" fill="#8ab8f0"/><rect x="222" y="715" width="8" height="24" fill="#f4f4f4" stroke="#222" stroke-width="1.2"/><path d="M222 721h8M222 727h8M222 733h8" stroke="#222" stroke-width="1"/><path d="M230 732l7-6l7 6l-7 7z" fill="#fff" stroke="#2f7fe8" stroke-width="1.3"/><text x="234.5" y="736" font-family="Liberation Sans" font-size="8" fill="#555">1</text><path d="M229 718L250 739M250 718L229 739" stroke="#e81818" stroke-width="2.2"/><text x="63" y="779" font-family="Liberation Serif" font-weight="700" font-size="25" fill="#b01818">A</text><path d="M116 762L103 774M103 774v-6M103 774h6" stroke="#b01818" stroke-width="2" fill="none"/><text x="115" y="773" font-family="Liberation Serif" font-weight="700" font-size="15" fill="#b01818">A</text><text x="144" y="780" font-family="Liberation Serif" font-weight="700" font-size="12" fill="#b01818">A</text><text x="158" y="768" font-family="Liberation Serif" font-weight="400" font-size="12" fill="#2f7fe8">B</text><path d="M157 779q0-6 5-6v-3M159 771l3-3l3 3" stroke="#111" stroke-width="1.3" fill="none"/><text x="180" y="766" font-family="Liberation Serif" font-weight="700" font-size="13" fill="#b01818">ABC</text><path d="M186 770l6 8l10-10" stroke="#6a5040" stroke-width="3" fill="none"/><text x="218" y="783" font-family="Liberation Serif" font-weight="700" font-size="26" fill="#b01818">C</text><text x="240" y="766" font-family="Liberation Serif" font-weight="700" font-size="13" fill="#b01818">C</text><path d="M240 781q0-6 5-6v-3M242 773l3-3l3 3" stroke="#6a5040" stroke-width="1.4" fill="none"/><text x="271" y="766" font-family="Liberation Serif" font-weight="700" font-size="13" fill="#c020c0">?</text><text x="260" y="781" font-family="Liberation Serif" font-weight="400" font-size="12" fill="#b01818">ABC</text><text x="317" y="764" font-family="Liberation Serif" font-weight="700" font-size="12" fill="#b01818">A</text><text x="304" y="781" font-family="Liberation Serif" font-weight="700" font-size="12" fill="#b01818">A</text><path d="M317 781q0-6 5-6v-3M319 773l3-3l3 3" stroke="#111" stroke-width="1.3" fill="none"/><text x="82" y="802" font-family="Liberation Serif" font-weight="400" font-size="15" fill="#2f7fe8">A</text><text x="64" y="818" font-family="Liberation Serif" font-weight="700" font-size="12" fill="#b01818">A</text><path d="M79 817q0-6 5-6v-3M81 809l3-3l3 3" stroke="#111" stroke-width="1.3" fill="none"/><text x="108" y="803" font-family="Liberation Serif" font-weight="700" font-size="12" fill="#b01818">1</text><path d="M116 809v14M109 816h14" stroke="#b01818" stroke-width="1.5"/><circle cx="116" cy="816" r="2" fill="#fff" stroke="#b01818"/><text x="139" y="801" font-family="Liberation Serif" font-weight="400" font-size="10" fill="#b01818">A1A</text><text x="147" y="817" font-family="Liberation Serif" font-weight="700" font-size="10" fill="#b01818">A2A</text><text x="180" y="802" font-family="Liberation Serif" font-weight="700" font-size="11" fill="#b01818">A1</text><text x="189" y="817" font-family="Liberation Serif" font-weight="700" font-size="11" fill="#2f7fe8">A1</text><path d="M180 804h10M189 819h12" stroke="#2f7fe8" stroke-width="1" stroke-dasharray="2 1"/><text x="222" y="802" font-family="Liberation Serif" font-weight="700" font-size="11" fill="#b01818">A1</text><text x="230" y="817" font-family="Liberation Serif" font-weight="700" font-size="11" fill="#2f7fe8">A2</text><path d="M222 804h10M230 819h12" stroke="#2f7fe8" stroke-width="1" stroke-dasharray="2 1"/><rect x="263" y="797" width="28" height="21" fill="#fff" stroke="#333" stroke-width="1" stroke-dasharray="1.5 1.5"/><text x="265" y="812" font-family="Liberation Serif" font-weight="400" font-size="10" fill="#b01818">ABC</text><path d="M265 815h24" stroke="#b01818" stroke-dasharray="2 1"/><path d="M303 798h27M303 806h27M303 814h27" stroke="#333" stroke-width="1.5" stroke-dasharray="3 2"/><path d="M303 798h27" stroke="#2f7fe8" stroke-width="1.5" stroke-dasharray="3 2"/><path d="M65 849h20M75 839v20M68.0 842.0l14.0 14.0M82.0 842.0l-14.0 14.0" stroke="#2f7fe8" stroke-width="1.3"/><circle cx="75" cy="849" r="2.5" fill="#2f7fe8"/><path d="M104 842h10M109 837v10M105.5 838.5l7.0 7.0M112.5 838.5l-7.0 7.0" stroke="#999" stroke-width="1.3"/><path d="M117 842h10M122 837v10M118.5 838.5l7.0 7.0M125.5 838.5l-7.0 7.0" stroke="#999" stroke-width="1.3"/><path d="M104 856h10M109 851v10M105.5 852.5l7.0 7.0M112.5 852.5l-7.0 7.0" stroke="#2f7fe8" stroke-width="1.3"/><path d="M117 856h10M122 851v10M118.5 852.5l7.0 7.0M125.5 852.5l-7.0 7.0" stroke="#999" stroke-width="1.3"/><path d="M157 842h10M162 837v10M158.5 838.5l7.0 7.0M165.5 838.5l-7.0 7.0" stroke="#2f7fe8" stroke-width="1.3"/><path d="M143 857h10M148 852v10M144.5 853.5l7.0 7.0M151.5 853.5l-7.0 7.0" stroke="#2f7fe8" stroke-width="1.3"/><path d="M156 862q0-6 5-6v-3M158 854l3-3l3 3" stroke="#111" stroke-width="1.5" fill="none"/><path d="M185 851h16M193 843v16M187.4 845.4l11.2 11.2M198.6 845.4l-11.2 11.2" stroke="#2f7fe8" stroke-width="1.3"/><circle cx="205" cy="838" r="4" fill="none" stroke="#222" stroke-width="1.6"/><path d="M224 853h16M232 845v16M226.4 847.4l11.2 11.2M237.6 847.4l-11.2 11.2" stroke="#2f7fe8" stroke-width="1.3"/><text x="238" y="845" font-family="Liberation Serif" font-weight="700" font-size="14" fill="#c020c0">?</text><path d="M266 861L284 841" stroke="#111" stroke-width="1.7"/><path d="M276 839h10v10z" fill="#fff" stroke="#2f7fe8" stroke-width="1.5"/><path d="M304 840h10M309 835v10M305.5 836.5l7.0 7.0M312.5 836.5l-7.0 7.0" stroke="#2f7fe8" stroke-width="1.3"/><path d="M313 840h10M318 835v10M314.5 836.5l7.0 7.0M321.5 836.5l-7.0 7.0" stroke="#2f7fe8" stroke-width="1.3"/><path d="M321 840h10M326 835v10M322.5 836.5l7.0 7.0M329.5 836.5l-7.0 7.0" stroke="#2f7fe8" stroke-width="1.3"/><path d="M304 854h10M309 849v10M305.5 850.5l7.0 7.0M312.5 850.5l-7.0 7.0" stroke="#2f7fe8" stroke-width="1.3"/><path d="M318 860q0-6 5-6v-3M320 852l3-3l3 3" stroke="#111" stroke-width="1.5" fill="none"/><rect x="62" y="875" width="27" height="23" fill="#e8eef8" stroke="#333" stroke-width="1.2"/><path d="M62 880h27M62 886h27M62 892h27M75 875v23" stroke="#333" stroke-width="1.2"/><rect x="62" y="875" width="27" height="4" fill="#5a8ad8"/><path d="M65 921h20" stroke="#2f7fe8" stroke-width="1.3" stroke-dasharray="2 1.5"/><circle cx="66" cy="921" r="2.5" fill="#fff" stroke="#2f7fe8" stroke-width="1.5"/><circle cx="84" cy="921" r="2.5" fill="#fff" stroke="#2f7fe8" stroke-width="1.5"/><path d="M106 913Q124 912 126 930" stroke="#333" stroke-width="1.6" fill="none"/><path d="M109 923l8 7" stroke="#2f7fe8" stroke-width="1.5"/><path d="M145 932h22M145 932L163 914" stroke="#5a4a20" stroke-width="1.5" fill="none"/><path d="M157 932q0-6-4-8" stroke="#5a4a20" stroke-width="1.2" fill="none"/><path d="M184 914h26M185 910v24M209 910v24" stroke="#333" stroke-width="1.4"/><path d="M186 924h22" stroke="#2f7fe8" stroke-width="1.5"/><path d="M186 924l4-3v6zM208 924l-4-3v6z" fill="#2f7fe8"/><rect x="222" y="915" width="30" height="17" rx="8" fill="#e8f0fc" stroke="#2f7fe8" stroke-width="1.6"/><path d="M262 921l8-6h20l-6 6z" fill="#fafafa" stroke="#555" stroke-width="1"/><path d="M262 921h22v10h-22z" fill="#e8e8e8" stroke="#555" stroke-width="1"/><path d="M284 921l6-6v10l-6 6z" fill="#c8c8c8" stroke="#555" stroke-width="1"/><path d="M62 936h28" stroke="#b8a820" stroke-width="1.2" stroke-dasharray="2 1.5"/><path d="M103 936h28" stroke="#b8a820" stroke-width="1.2" stroke-dasharray="2 1.5"/><path d="M144 936h28" stroke="#b8a820" stroke-width="1.2" stroke-dasharray="2 1.5"/><path d="M185 936h28" stroke="#b8a820" stroke-width="1.2" stroke-dasharray="2 1.5"/><path d="M226 936h28" stroke="#b8a820" stroke-width="1.2" stroke-dasharray="2 1.5"/><path d="M266 936h28" stroke="#b8a820" stroke-width="1.2" stroke-dasharray="2 1.5"/></svg>
<div class="r" style="left:386px;top:183px;width:1578px;height:754px;background:#bcd4ec;border-top:1px solid #333;border-left:1px solid #333;border-bottom:1px solid #111;border-radius:8px 0 0 0;"></div>
<div class="r" style="left:387px;top:184px;width:1577px;height:41px;background:linear-gradient(#9bb6d6,#bcd2ea);border-radius:7px 0 0 0;"></div>
<div class="r" style="left:400px;top:198px;width:21px;height:21px;background:#d9e4f0;border:1px solid #c0cede;border-radius:3px 6px 3px 3px;"></div>
<div class="r" style="left:405px;top:203px;width:11px;height:11px;background:#505050;border:1px solid #8a8a8a;"></div>
<div class="t" style="left:428.00px;top:200.64px;font-size:18.15px;color:#111;font-weight:400;font-family:'Liberation Sans',sans-serif;transform:scaleX(0.9413);transform-origin:0 0;-webkit-text-stroke:0.25px currentColor;">View 1, Model</div>
<div class="r" style="left:397px;top:225px;width:1567px;height:34px;background:#f0f0f0;"></div>
<div class="r" style="left:397px;top:259px;width:1561px;height:668px;background:#263434;"></div>
<div class="r" style="left:387px;top:935px;width:1577px;height:1px;background:#5ad6ee;"></div>
<div class="r" style="left:386px;top:936px;width:1578px;height:1.5px;background:#151515;"></div>
<div class="r" style="left:386px;top:937.5px;width:1578px;height:8.5px;background:#afafaf;"></div>
<div class="r" style="left:387px;top:225px;width:2px;height:710px;background:#e4eef8;"></div>
<div class="r" style="left:670px;top:227px;width:32px;height:30px;background:linear-gradient(#f9d9a0,#fde8a0 60%,#fff0a8);border:1.5px solid #5a8ae0;"></div>
<svg class="r" style="left:0px;top:0px;left:0;top:0;" width="910" height="270" viewBox="0 0 910 270"><rect x="403" y="235" width="17" height="14" fill="#f4f4fa" stroke="#555" stroke-width="1.3"/><rect x="404" y="236" width="15" height="3" fill="#5a7ac8"/><rect x="413" y="242" width="12" height="12" fill="#fbf3c8" stroke="#3a6ad8" stroke-width="1.3"/><path d="M416 246h7M416 250h7" stroke="#888" stroke-width="1.3"/><circle cx="415.5" cy="246" r="1" fill="#e33"/><circle cx="415.5" cy="250" r="1" fill="#3c3"/><path d="M435.5 238.2h11l-5.5 5.5z" fill="#000"/><path d="M474.0 251.0h8l-4.0 4.0z" fill="#000"/><path d="M458 246l8-11l11 3l-1 9l-10 6z" fill="#5aa8ee" stroke="#2a5aa8" stroke-width="1.6"/><circle cx="463" cy="247" r="3" fill="#1a6ae8"/><path d="M468 240l5 2M469 244l5 1" stroke="#cfe8ff" stroke-width="1.5"/><path d="M498 230v24M486 242h24M490 234l16 16M506 234l-16 16" stroke="#555" stroke-width="1.6"/><circle cx="498" cy="242" r="7" fill="#9ad8ee"/><circle cx="496" cy="240" r="3" fill="#e8f8ff"/><path d="M519.5 238.2h11l-5.5 5.5z" fill="#000"/><path d="M539.5 228v28" stroke="#999" stroke-width="1.2"/><path d="M768.5 228v28M840.5 228v28" stroke="#999" stroke-width="1.2"/><path d="M557 232h4l1 9h-6z" fill="#b02a2a"/><path d="M553 241h12l2 9h-16z" fill="#5a8ae8"/><path d="M553 249l-1 2h16l-1-2" stroke="#1a4ab8" stroke-width="1.5"/><line x1="591.9" y1="242.8" x2="597.9" y2="249.4" stroke="#e08a2a" stroke-width="3"/><circle cx="588" cy="239" r="5.5" fill="#e0f0fa" stroke="#3a4a6a" stroke-width="1.5"/><path d="M585 239h6M588 236v6" stroke="#111" stroke-width="1.4"/><line x1="623.9" y1="242.8" x2="629.9" y2="249.4" stroke="#e08a2a" stroke-width="3"/><circle cx="620" cy="239" r="5.5" fill="#e0f0fa" stroke="#3a4a6a" stroke-width="1.5"/><path d="M617 239h6" stroke="#111" stroke-width="1.4"/><rect x="645" y="233" width="17" height="17" fill="none" stroke="#333" stroke-width="1.2" stroke-dasharray="2.5 1.5"/><line x1="653.5" y1="240.5" x2="659.0" y2="246.5" stroke="#e08a2a" stroke-width="3"/><circle cx="650" cy="237" r="5" fill="#d0ecf8" stroke="#3a4a6a" stroke-width="1.5"/><rect x="675" y="232" width="21" height="18" fill="#eeeef6" stroke="#333" stroke-width="1.6"/><rect x="676" y="233" width="19" height="3" fill="#3a5aa8"/><path d="M685.5 236v13M677 242.5h17" stroke="#111" stroke-width="1.3"/><path d="M685.5 235l-2 2.5h4zM685.5 249l-2-2.5h4zM676 242.5l2.5-2v4zM695 242.5l-2.5-2v4z" fill="#111"/><path d="M716 233q-8 6-3 14q4 4 10 0" stroke="#2a8af0" stroke-width="3" fill="none"/><path d="M708 242q6-2 12 2" stroke="#4ab0f8" stroke-width="3" fill="none"/><path d="M720 240l5 5l1-7z" fill="#1a5ad8"/><path d="M743 244v-7q0-2 2-2t2 2v-4q0-2 2-2t2 2v2q0-2 2-2t2 2v2q0-2 2-2t2 2v10q0 7-7 7h-2q-5 0-8-6l-3-5q-1-2 1-3t3 1z" fill="#f0f0fa" stroke="#1a4ad0" stroke-width="1.6"/><rect x="778" y="233" width="20" height="16" fill="#f4f4fa" stroke="#555" stroke-width="1.3"/><rect x="779" y="234" width="18" height="3" fill="#5a7ac8"/><path d="M794 246q-4-6-10-3l1 3" stroke="#444" stroke-width="1.2" fill="none"/><path d="M781 247l2-5l3 4z" fill="#111"/><rect x="809" y="233" width="20" height="16" fill="#f4f4fa" stroke="#555" stroke-width="1.3"/><rect x="810" y="234" width="18" height="3" fill="#5a7ac8"/><path d="M813 246q4-6 10-3l-1 3" stroke="#444" stroke-width="1.2" fill="none"/><path d="M826 247l-2-5l-3 4z" fill="#111"/><rect x="858" y="232" width="11" height="8" fill="#fff" stroke="#555" stroke-width="1.2"/><rect x="849" y="244" width="11" height="8" fill="#fff" stroke="#555" stroke-width="1.2"/><path d="M864 252q0-5 3-6" stroke="#6a5030" stroke-width="1.5" fill="none"/><path d="M884 234l7-3l7 3v7l-7 3l-7-3z" fill="#bfe0ff" stroke="#2a7ae8" stroke-width="1.5"/><path d="M884 241l14 12M898 241l-14 12" stroke="#111" stroke-width="1.8"/><circle cx="885" cy="253" r="2.5" fill="#2a7ae8"/><circle cx="897" cy="253" r="2.5" fill="#2a7ae8"/></svg>
<div class="r" style="left:397px;top:259px;width:1561px;height:668px;overflow:hidden;"><svg width="2000" height="1125" viewBox="0 0 2000 1125" style="position:absolute;left:-397px;top:-259px"><path d="M461.7 455.6 L563.8 282.8" stroke="#e8e8e8" stroke-width="1.1" fill="none" /><path d="M470.0 459.6 L572.2 286.7" stroke="#e8e8e8" stroke-width="1.1" fill="none" /><path d="M480.4 464.7 L582.8 291.6" stroke="#e8e8e8" stroke-width="1.1" fill="none" /><path d="M487.0 467.9 L589.4 294.6" stroke="#e8e8e8" stroke-width="1.1" fill="none" /><path d="M500.0 474.3 L602.6 300.7" stroke="#e8e8e8" stroke-width="1.1" fill="none" /><path d="M515.0 481.6 L617.8 307.7" stroke="#e8e8e8" stroke-width="1.1" fill="none" /><path d="M531.6 489.7 L634.6 315.4" stroke="#e8e8e8" stroke-width="1.1" fill="none" /><path d="M567.0 507.0 L670.5 331.9" stroke="#e8e8e8" stroke-width="1.1" fill="none" /><path d="M563.5 282.7 L1000.0 483.5" stroke="#e8e8e8" stroke-width="1.1" fill="none" /><path d="M446.8 448.3 L577.6 512.0 L647.0 395.0 L660.0 374.0" stroke="#e01010" stroke-width="1.4" fill="none" /><path d="M680.0 360.0 L664.9 393.3 L596.0 510.0 L593.8 517.8 L600.0 522.0 L700.8 574.4" stroke="#e01010" stroke-width="1.4" fill="none" /><path d="M427.2 486.4 L971.2 750.4" stroke="#e01010" stroke-width="1.4" fill="none" /><path d="M708.8 579.2 L832.0 638.4" stroke="#e01010" stroke-width="1.4" fill="none" /><path d="M836.8 640.0 L958.4 700.8" stroke="#e01010" stroke-width="1.4" fill="none" /><path d="M441.6 459.2 L503.0 489.0 L496.0 503.0 L434.6 474.2" stroke="#19e019" stroke-width="1.5" fill="none" /><path d="M507.2 492.0 L957.0 700.5 L961.0 699.0" stroke="#19e019" stroke-width="1.5" fill="none" /><path d="M500.8 504.0 L954.0 728.0 L961.0 716.0 L968.0 705.3" stroke="#19e019" stroke-width="1.5" fill="none" /><path d="M507.2 492.0 L500.8 504.0" stroke="#19e019" stroke-width="1.5" fill="none" /><path d="M700.8 574.4 L820.0 389.0" stroke="#e01010" stroke-width="1.4" fill="none" /><path d="M708.8 579.2 L823.5 389.0" stroke="#e01010" stroke-width="1.4" fill="none" /><path d="M784.0 616.0 L892.8 440.0 L905.0 421.0" stroke="#e8e8e8" stroke-width="1.1" fill="none" /><path d="M832.0 638.4 L920.0 504.0" stroke="#e01010" stroke-width="1.4" fill="none" /><path d="M836.8 640.0 L924.0 507.0" stroke="#e01010" stroke-width="1.4" fill="none" /><path d="M961.0 699.0 L1096.0 533.8" stroke="#19e019" stroke-width="1.5" fill="none" /><path d="M968.0 705.3 L1109.0 533.8" stroke="#19e019" stroke-width="1.5" fill="none" /><path d="M978.7 720.0 L1122.3 533.8" stroke="#e01010" stroke-width="1.3" fill="none" /><path d="M1018.6 533.8 L1073.3 563.1" stroke="#e8e8e8" stroke-width="1.1" fill="none" /><path d="M1097.3 566.1 L1215.8 651.4" stroke="#e8e8e8" stroke-width="1.1" fill="none" /><path d="M1079.9 588.8 L1198.0 673.8" stroke="#e8e8e8" stroke-width="1.1" fill="none" /><path d="M1065.1 608.0 L1185.0 694.3" stroke="#e8e8e8" stroke-width="1.1" fill="none" /><path d="M1298.5 546.2 L1417.4 631.8" stroke="#e8e8e8" stroke-width="1.1" fill="none" /><path d="M1283.5 565.8 L1406.2 654.2" stroke="#e8e8e8" stroke-width="1.1" fill="none" /><path d="M1208.6 534.0 L1395.0 668.2" stroke="#e8e8e8" stroke-width="1.1" fill="none" /><path d="M1148.7 534.0 L1372.6 695.2" stroke="#e8e8e8" stroke-width="1.1" fill="none" /><path d="M1116.0 541.9 L1357.6 715.8" stroke="#e8e8e8" stroke-width="1.1" fill="none" /><path d="M1106.0 554.8 L1346.4 727.9" stroke="#e8e8e8" stroke-width="1.1" fill="none" /><path d="M1184.8 695.2 L1298.9 545.6" stroke="#e01010" stroke-width="1.4" fill="none" /><path d="M1191.0 698.0 L1303.5 547.7" stroke="#e01010" stroke-width="1.4" fill="none" /><path d="M1288.4 803.2 L1515.7 515.4" stroke="#e01010" stroke-width="1.3" fill="none" /><path d="M1298.5 813.3 L1465.0 604.0" stroke="#19e019" stroke-width="1.5" fill="none" /><path d="M1304.0 817.0 L1470.0 607.0" stroke="#19e019" stroke-width="1.5" fill="none" /><path d="M1470.6 597.0 L1528.3 525.5 L1533.0 529.0 L1476.0 600.0 L1470.6 597.0" stroke="#19e019" stroke-width="1.5" fill="none" /><path d="M1528.3 525.5 L1684.8 630.5" stroke="#e8e8e8" stroke-width="1.2" fill="none" /><path d="M1301.0 813.3 L1422.2 901.7 L1801.4 508.4 L1928.7 621.9 L1756.6 806.6 L1472.5 597.0" stroke="#e8e8e8" stroke-width="1.2" fill="none" /><path d="M514.0 367.0 L1837.7 760.7 L1818.6 818.9 L491.6 424.4 L514.0 367.0 L537.0 372.0" stroke="#ff1a1a" stroke-width="3.2" fill="none" stroke-dasharray="9 4"/><path d="M516 378h18M524 369v9M526 371l7 7" stroke="#f8f8f8" stroke-width="1.5" fill="none"/><path d="M521 381h11" stroke="#e8e8e8" stroke-width="1.6" stroke-dasharray="2 1"/><path d="M506 377h8" stroke="#d0d0d0" stroke-width="1.2" stroke-dasharray="1.5 1"/><path d="M568 397h18M576 388v9M578 390l7 7" stroke="#f8f8f8" stroke-width="1.5" fill="none"/><path d="M573 400h11" stroke="#e8e8e8" stroke-width="1.6" stroke-dasharray="2 1"/><path d="M558 396h8" stroke="#d0d0d0" stroke-width="1.2" stroke-dasharray="1.5 1"/><path d="M620 410h18M628 401v9M630 403l7 7" stroke="#f8f8f8" stroke-width="1.5" fill="none"/><path d="M625 413h11" stroke="#e8e8e8" stroke-width="1.6" stroke-dasharray="2 1"/><path d="M610 409h8" stroke="#d0d0d0" stroke-width="1.2" stroke-dasharray="1.5 1"/><path d="M595.8 412.8h18M603.8 403.8v9M605.8 405.8l7 7" stroke="#f8f8f8" stroke-width="1.5" fill="none"/><path d="M600.8 415.8h11" stroke="#e8e8e8" stroke-width="1.6" stroke-dasharray="2 1"/><path d="M585.8 411.8h8" stroke="#d0d0d0" stroke-width="1.2" stroke-dasharray="1.5 1"/><path d="M679 441.6h18M687 432.6v9M689 434.6l7 7" stroke="#f8f8f8" stroke-width="1.5" fill="none"/><path d="M684 444.6h11" stroke="#e8e8e8" stroke-width="1.6" stroke-dasharray="2 1"/><path d="M669 440.6h8" stroke="#d0d0d0" stroke-width="1.2" stroke-dasharray="1.5 1"/><path d="M803.8 500.8h18M811.8 491.8v9M813.8 493.8l7 7" stroke="#f8f8f8" stroke-width="1.5" fill="none"/><path d="M808.8 503.8h11" stroke="#e8e8e8" stroke-width="1.6" stroke-dasharray="2 1"/><path d="M793.8 499.8h8" stroke="#d0d0d0" stroke-width="1.2" stroke-dasharray="1.5 1"/><path d="M851.8 542.4h18M859.8 533.4v9M861.8 535.4l7 7" stroke="#f8f8f8" stroke-width="1.5" fill="none"/><path d="M856.8 545.4h11" stroke="#e8e8e8" stroke-width="1.6" stroke-dasharray="2 1"/><path d="M841.8 541.4h8" stroke="#d0d0d0" stroke-width="1.2" stroke-dasharray="1.5 1"/><path d="M944.6 595.2h18M952.6 586.2v9M954.6 588.2l7 7" stroke="#f8f8f8" stroke-width="1.5" fill="none"/><path d="M949.6 598.2h11" stroke="#e8e8e8" stroke-width="1.6" stroke-dasharray="2 1"/><path d="M934.6 594.2h8" stroke="#d0d0d0" stroke-width="1.2" stroke-dasharray="1.5 1"/><path d="M1204 541h18M1212 532v9M1214 534l7 7" stroke="#f8f8f8" stroke-width="1.5" fill="none"/><path d="M1209 544h11" stroke="#e8e8e8" stroke-width="1.6" stroke-dasharray="2 1"/><path d="M1194 540h8" stroke="#d0d0d0" stroke-width="1.2" stroke-dasharray="1.5 1"/><path d="M1193.7 556h18M1201.7 547v9M1203.7 549l7 7" stroke="#f8f8f8" stroke-width="1.5" fill="none"/><path d="M1198.7 559h11" stroke="#e8e8e8" stroke-width="1.6" stroke-dasharray="2 1"/><path d="M1183.7 555h8" stroke="#d0d0d0" stroke-width="1.2" stroke-dasharray="1.5 1"/><path d="M1188.3 576h18M1196.3 567v9M1198.3 569l7 7" stroke="#f8f8f8" stroke-width="1.5" fill="none"/><path d="M1193.3 579h11" stroke="#e8e8e8" stroke-width="1.6" stroke-dasharray="2 1"/><path d="M1178.3 575h8" stroke="#d0d0d0" stroke-width="1.2" stroke-dasharray="1.5 1"/><path d="M1168.3 600h18M1176.3 591v9M1178.3 593l7 7" stroke="#f8f8f8" stroke-width="1.5" fill="none"/><path d="M1173.3 603h11" stroke="#e8e8e8" stroke-width="1.6" stroke-dasharray="2 1"/><path d="M1158.3 599h8" stroke="#d0d0d0" stroke-width="1.2" stroke-dasharray="1.5 1"/><path d="M1137.7 609.3h18M1145.7 600.3v9M1147.7 602.3l7 7" stroke="#f8f8f8" stroke-width="1.5" fill="none"/><path d="M1142.7 612.3h11" stroke="#e8e8e8" stroke-width="1.6" stroke-dasharray="2 1"/><path d="M1127.7 608.3h8" stroke="#d0d0d0" stroke-width="1.2" stroke-dasharray="1.5 1"/><path d="M1132.3 645.3h18M1140.3 636.3v9M1142.3 638.3l7 7" stroke="#f8f8f8" stroke-width="1.5" fill="none"/><path d="M1137.3 648.3h11" stroke="#e8e8e8" stroke-width="1.6" stroke-dasharray="2 1"/><path d="M1122.3 644.3h8" stroke="#d0d0d0" stroke-width="1.2" stroke-dasharray="1.5 1"/><path d="M1249.7 624h18M1257.7 615v9M1259.7 617l7 7" stroke="#f8f8f8" stroke-width="1.5" fill="none"/><path d="M1254.7 627h11" stroke="#e8e8e8" stroke-width="1.6" stroke-dasharray="2 1"/><path d="M1239.7 623h8" stroke="#d0d0d0" stroke-width="1.2" stroke-dasharray="1.5 1"/><path d="M1296.3 658.7h18M1304.3 649.7v9M1306.3 651.7l7 7" stroke="#f8f8f8" stroke-width="1.5" fill="none"/><path d="M1301.3 661.7h11" stroke="#e8e8e8" stroke-width="1.6" stroke-dasharray="2 1"/><path d="M1286.3 657.7h8" stroke="#d0d0d0" stroke-width="1.2" stroke-dasharray="1.5 1"/><path d="M1343 601.3h18M1351 592.3v9M1353 594.3l7 7" stroke="#f8f8f8" stroke-width="1.5" fill="none"/><path d="M1348 604.3h11" stroke="#e8e8e8" stroke-width="1.6" stroke-dasharray="2 1"/><path d="M1333 600.3h8" stroke="#d0d0d0" stroke-width="1.2" stroke-dasharray="1.5 1"/><path d="M1340.3 621.3h18M1348.3 612.3v9M1350.3 614.3l7 7" stroke="#f8f8f8" stroke-width="1.5" fill="none"/><path d="M1345.3 624.3h11" stroke="#e8e8e8" stroke-width="1.6" stroke-dasharray="2 1"/><path d="M1330.3 620.3h8" stroke="#d0d0d0" stroke-width="1.2" stroke-dasharray="1.5 1"/><path d="M1325.7 644h18M1333.7 635v9M1335.7 637l7 7" stroke="#f8f8f8" stroke-width="1.5" fill="none"/><path d="M1330.7 647h11" stroke="#e8e8e8" stroke-width="1.6" stroke-dasharray="2 1"/><path d="M1315.7 643h8" stroke="#d0d0d0" stroke-width="1.2" stroke-dasharray="1.5 1"/><path d="M1363 746.7h18M1371 737.7v9M1373 739.7l7 7" stroke="#f8f8f8" stroke-width="1.5" fill="none"/><path d="M1368 749.7h11" stroke="#e8e8e8" stroke-width="1.6" stroke-dasharray="2 1"/><path d="M1353 745.7h8" stroke="#d0d0d0" stroke-width="1.2" stroke-dasharray="1.5 1"/><path d="M1063 572h18M1071 563v9M1073 565l7 7" stroke="#f8f8f8" stroke-width="1.5" fill="none"/><path d="M1068 575h11" stroke="#e8e8e8" stroke-width="1.6" stroke-dasharray="2 1"/><path d="M1053 571h8" stroke="#d0d0d0" stroke-width="1.2" stroke-dasharray="1.5 1"/><path d="M1507.5 568.4h18M1515.5 559.4v9M1517.5 561.4l7 7" stroke="#f8f8f8" stroke-width="1.5" fill="none"/><path d="M1512.5 571.4h11" stroke="#e8e8e8" stroke-width="1.6" stroke-dasharray="2 1"/><path d="M1497.5 567.4h8" stroke="#d0d0d0" stroke-width="1.2" stroke-dasharray="1.5 1"/><path d="M1570.6 613.5h18M1578.6 604.5v9M1580.6 606.5l7 7" stroke="#f8f8f8" stroke-width="1.5" fill="none"/><path d="M1575.6 616.5h11" stroke="#e8e8e8" stroke-width="1.6" stroke-dasharray="2 1"/><path d="M1560.6 612.5h8" stroke="#d0d0d0" stroke-width="1.2" stroke-dasharray="1.5 1"/><path d="M1771.3 657.5h18M1779.3 648.5v9M1781.3 650.5l7 7" stroke="#f8f8f8" stroke-width="1.5" fill="none"/><path d="M1776.3 660.5h11" stroke="#e8e8e8" stroke-width="1.6" stroke-dasharray="2 1"/><path d="M1761.3 656.5h8" stroke="#d0d0d0" stroke-width="1.2" stroke-dasharray="1.5 1"/><path d="M1454 751.2h18M1462 742.2v9M1464 744.2l7 7" stroke="#f8f8f8" stroke-width="1.5" fill="none"/><path d="M1459 754.2h11" stroke="#e8e8e8" stroke-width="1.6" stroke-dasharray="2 1"/><path d="M1444 750.2h8" stroke="#d0d0d0" stroke-width="1.2" stroke-dasharray="1.5 1"/><g transform="translate(748 433) rotate(0)"><path d="M0 0h32" stroke="#e01818" stroke-width="2.4" stroke-dasharray="3 1 4 1 2 1 3 1 4 1 5"/></g><g transform="translate(832 459) rotate(0)"><path d="M0 0h32" stroke="#e01818" stroke-width="2.4" stroke-dasharray="3 1 4 1 2 1 3 1 4 1 5"/></g><g transform="translate(1507 657) rotate(0)"><path d="M0 0h32" stroke="#e01818" stroke-width="2.4" stroke-dasharray="3 1 4 1 2 1 3 1 4 1 5"/></g><g transform="translate(1593 681) rotate(0)"><path d="M0 0h32" stroke="#e01818" stroke-width="2.4" stroke-dasharray="3 1 4 1 2 1 3 1 4 1 5"/></g><g transform="translate(1671 707) rotate(0)"><path d="M0 0h32" stroke="#e01818" stroke-width="2.4" stroke-dasharray="3 1 4 1 2 1 3 1 4 1 5"/></g><g transform="translate(1759 733) rotate(0)"><path d="M0 0h32" stroke="#e01818" stroke-width="2.4" stroke-dasharray="3 1 4 1 2 1 3 1 4 1 5"/></g><g transform="translate(1845 756) rotate(0)"><path d="M0 0h32" stroke="#e01818" stroke-width="2.4" stroke-dasharray="3 1 4 1 2 1 3 1 4 1 5"/></g><g transform="translate(1451 726) rotate(0)"><path d="M0 0h32" stroke="#e01818" stroke-width="2.4" stroke-dasharray="3 1 4 1 2 1 3 1 4 1 5"/></g><g transform="translate(1534 751) rotate(0)"><path d="M0 0h32" stroke="#e01818" stroke-width="2.4" stroke-dasharray="3 1 4 1 2 1 3 1 4 1 5"/></g><g transform="translate(1631 779) rotate(0)"><path d="M0 0h32" stroke="#e01818" stroke-width="2.4" stroke-dasharray="3 1 4 1 2 1 3 1 4 1 5"/></g><g transform="translate(1706 803) rotate(0)"><path d="M0 0h32" stroke="#e01818" stroke-width="2.4" stroke-dasharray="3 1 4 1 2 1 3 1 4 1 5"/></g><g transform="translate(1822 821) rotate(0)"><path d="M0 0h32" stroke="#e01818" stroke-width="2.4" stroke-dasharray="3 1 4 1 2 1 3 1 4 1 5"/></g><g transform="translate(1384 625) rotate(0)"><path d="M0 0h32" stroke="#e01818" stroke-width="2.4" stroke-dasharray="3 1 4 1 2 1 3 1 4 1 5"/></g><g transform="translate(1393 705) rotate(0)"><path d="M0 0h32" stroke="#e01818" stroke-width="2.4" stroke-dasharray="3 1 4 1 2 1 3 1 4 1 5"/></g><g transform="translate(694 502) rotate(0)"><path d="M0 0h32" stroke="#e01818" stroke-width="2.4" stroke-dasharray="3 1 4 1 2 1 3 1 4 1 5"/></g><g transform="translate(889 557) rotate(0)"><path d="M0 0h32" stroke="#e01818" stroke-width="2.4" stroke-dasharray="3 1 4 1 2 1 3 1 4 1 5"/></g><g transform="translate(947 576) rotate(0)"><path d="M0 0h32" stroke="#e01818" stroke-width="2.4" stroke-dasharray="3 1 4 1 2 1 3 1 4 1 5"/></g><g transform="translate(1150 552) rotate(30)"><path d="M0 0h32" stroke="#e01818" stroke-width="2.4" stroke-dasharray="3 1 4 1 2 1 3 1 4 1 5"/></g><g transform="translate(1283 585) rotate(30)"><path d="M0 0h32" stroke="#e01818" stroke-width="2.4" stroke-dasharray="3 1 4 1 2 1 3 1 4 1 5"/></g><g transform="translate(1135 625) rotate(40)"><path d="M0 0h32" stroke="#e01818" stroke-width="2.4" stroke-dasharray="3 1 4 1 2 1 3 1 4 1 5"/></g><g transform="translate(1262 662) rotate(30)"><path d="M0 0h32" stroke="#e01818" stroke-width="2.4" stroke-dasharray="3 1 4 1 2 1 3 1 4 1 5"/></g><g transform="translate(1040 620) rotate(-55)"><path d="M0 0h32" stroke="#e01818" stroke-width="2.4" stroke-dasharray="3 1 4 1 2 1 3 1 4 1 5"/></g><g transform="translate(571 491) rotate(-55)"><path d="M0 0h32" stroke="#e01818" stroke-width="2.4" stroke-dasharray="3 1 4 1 2 1 3 1 4 1 5"/></g><g transform="translate(469 449) rotate(-58)"><path d="M0 0h32" stroke="#e01818" stroke-width="2.4" stroke-dasharray="3 1 4 1 2 1 3 1 4 1 5"/></g><g transform="translate(520 363) rotate(-58)"><path d="M0 0h32" stroke="#e01818" stroke-width="2.4" stroke-dasharray="3 1 4 1 2 1 3 1 4 1 5"/></g><path d="M1600 631V622L1609 631z" fill="none" stroke="#d01818" stroke-width="1.4"/><path d="M1776 651V642L1785 651z" fill="none" stroke="#d01818" stroke-width="1.4"/><path d="M1447 785V776L1456 785z" fill="none" stroke="#d01818" stroke-width="1.4"/><path d="M1125 602h14" stroke="#b82020" stroke-width="1.6" stroke-dasharray="2 1 3 1"/><path d="M1183 622h14" stroke="#b82020" stroke-width="1.6" stroke-dasharray="2 1 3 1"/><path d="M1215 632h14" stroke="#b82020" stroke-width="1.6" stroke-dasharray="2 1 3 1"/><path d="M1240 646h14" stroke="#b82020" stroke-width="1.6" stroke-dasharray="2 1 3 1"/><path d="M1197 600h14" stroke="#b82020" stroke-width="1.6" stroke-dasharray="2 1 3 1"/><path d="M1275 642h14" stroke="#b82020" stroke-width="1.6" stroke-dasharray="2 1 3 1"/><path d="M1319 611h14" stroke="#b82020" stroke-width="1.6" stroke-dasharray="2 1 3 1"/><path d="M1404 614h14" stroke="#b82020" stroke-width="1.6" stroke-dasharray="2 1 3 1"/><path d="M1420 627h14" stroke="#b82020" stroke-width="1.6" stroke-dasharray="2 1 3 1"/><path d="M1527 606h14" stroke="#b82020" stroke-width="1.6" stroke-dasharray="2 1 3 1"/><path d="M1560 701h14" stroke="#b82020" stroke-width="1.6" stroke-dasharray="2 1 3 1"/><path d="M1740 686h14" stroke="#b82020" stroke-width="1.6" stroke-dasharray="2 1 3 1"/><path d="M1095 676h14" stroke="#b82020" stroke-width="1.6" stroke-dasharray="2 1 3 1"/><path d="M1247 678h14" stroke="#b82020" stroke-width="1.6" stroke-dasharray="2 1 3 1"/><path d="M960 607h14" stroke="#b82020" stroke-width="1.6" stroke-dasharray="2 1 3 1"/><path d="M930 616h14" stroke="#b82020" stroke-width="1.6" stroke-dasharray="2 1 3 1"/><path d="M1500 620h14" stroke="#b82020" stroke-width="1.6" stroke-dasharray="2 1 3 1"/><path d="M1110 551h14" stroke="#b82020" stroke-width="1.6" stroke-dasharray="2 1 3 1"/><path d="M515 407h14" stroke="#b82020" stroke-width="1.6" stroke-dasharray="2 1 3 1"/><path d="M545 410h14" stroke="#b82020" stroke-width="1.6" stroke-dasharray="2 1 3 1"/><path d="M571 395h14" stroke="#b82020" stroke-width="1.6" stroke-dasharray="2 1 3 1"/><path d="M620 452h14" stroke="#b82020" stroke-width="1.6" stroke-dasharray="2 1 3 1"/></svg></div>
<div class="r" style="left:537px;top:308px;width:285px;height:84px;background:#f0f0f0;border:1px solid #bfbfbf;box-shadow:0 0 2px rgba(0,0,0,.3);"></div>
<div class="r" style="left:538px;top:309px;width:283px;height:34px;background:#fff;"></div>
<svg class="r" style="left:543px;top:314px;" width="18" height="23" viewBox="0 0 18 23"><path d="M5 2C2 6 2 10 4 14L6 21H13L15 13C17 9 16 4 12 3L11 8L8 8L7 2z" fill="#c8c8cc" stroke="#8a8a90" stroke-width="1"/></svg>
<div class="t" style="left:572.70px;top:315.57px;font-size:17.05px;color:#a8a8a8;font-weight:400;font-family:'Liberation Sans',sans-serif;transform:scaleX(0.9101);transform-origin:0 0;-webkit-text-stroke:0.25px currentColor;">Fit Vi...</div>
<div class="r" style="left:652px;top:325px;width:14px;height:1px;background:#555;"></div>
<div class="r" style="left:716px;top:318px;width:14px;height:13px;border:1px solid #e0e0e0;"></div>
<svg class="r" style="left:782px;top:318px;" width="15" height="15" viewBox="0 0 15 15"><path d="M0.5 0.5L14.5 14.5M14.5 0.5L0.5 14.5" stroke="#777" stroke-width="1.1"/></svg>
<div class="t" style="left:581.70px;top:353.53px;font-size:16.5px;color:#222;font-weight:400;font-family:'Liberation Sans',sans-serif;transform:scaleX(0.8371);transform-origin:0 0;-webkit-text-stroke:0.25px currentColor;">Files:</div>
<div class="r" style="left:582px;top:369px;width:8px;height:1px;background:#222;"></div>
<div class="r" style="left:626px;top:351px;width:146px;height:21px;background:#e1e1e1;border:1px solid #adadad;"></div>
<div class="t" style="left:632.00px;top:353.03px;font-size:16.5px;color:#111;font-weight:400;font-family:'Liberation Sans',sans-serif;transform:scaleX(0.7634);transform-origin:0 0;-webkit-text-stroke:0.25px currentColor;">All</div>
<svg class="r" style="left:752px;top:358px;" width="13" height="6" viewBox="0 0 13 6"><path d="M0 0H13L6.5 6z" fill="#111"/></svg>
<div class="r" style="left:902px;top:150px;width:1062px;height:181px;background:#fff;border-top:1px solid #2b87e0;border-left:1px solid #2b87e0;"></div>
<div class="r" style="left:915px;top:160px;width:23px;height:21px;background:radial-gradient(circle at 40% 60%,#2f86c6,#0a3d6a 70%);border-radius:3px;"></div>
<svg class="r" style="left:915px;top:160px;" width="23" height="21" viewBox="0 0 23 21"><path d="M4 17C6 12 8 6 10 5C11 9 11 12 12 12C14 9 16 5 18 4C17 9 16 13 16 15" stroke="#bfe6ff" stroke-width="1.3" fill="none"/><rect x="17" y="15" width="3" height="3" fill="#fff"/></svg>
<div class="t" style="left:945.50px;top:162.14px;font-size:18.15px;color:#111;font-weight:400;font-family:'Liberation Sans',sans-serif;transform:scaleX(0.9297);transform-origin:0 0;-webkit-text-stroke:0.25px currentColor;">gCadas - Xã Hà Ninh - Huyện Hà Trung - Thanh Hóa</div>
<div class="r" style="left:1851px;top:171px;width:15px;height:2px;background:#222;"></div>
<div class="r" style="left:1916px;top:163px;width:15px;height:15px;border:1px solid #ccc;"></div>
<div class="r" style="left:903px;top:193px;width:1061px;height:32px;background:#c8dff8;"></div>
<div class="t" style="left:1010.00px;top:201.07px;font-size:17.05px;color:#111;font-weight:400;font-family:'Liberation Sans',sans-serif;transform:scaleX(0.9437);transform-origin:0 0;-webkit-text-stroke:0.25px currentColor;">Bản đồ</div>
<div class="t" style="left:1084.00px;top:201.07px;font-size:17.05px;color:#111;font-weight:400;font-family:'Liberation Sans',sans-serif;transform:scaleX(0.9516);transform-origin:0 0;-webkit-text-stroke:0.25px currentColor;">Hồ sơ</div>
<div class="t" style="left:1150.00px;top:201.07px;font-size:17.05px;color:#111;font-weight:400;font-family:'Liberation Sans',sans-serif;transform:scaleX(0.9347);transform-origin:0 0;-webkit-text-stroke:0.25px currentColor;">Cơ sở dữ liệu</div>
<div class="t" style="left:1270.00px;top:201.07px;font-size:17.05px;color:#111;font-weight:400;font-family:'Liberation Sans',sans-serif;transform:scaleX(0.9358);transform-origin:0 0;-webkit-text-stroke:0.25px currentColor;">Cơ sở dữ liệu TT75</div>
<div class="t" style="left:1432.00px;top:201.07px;font-size:17.05px;color:#111;font-weight:400;font-family:'Liberation Sans',sans-serif;transform:scaleX(0.9897);transform-origin:0 0;-webkit-text-stroke:0.25px currentColor;">Biến động</div>
<div class="t" style="left:1530.00px;top:201.07px;font-size:17.05px;color:#111;font-weight:400;font-family:'Liberation Sans',sans-serif;transform:scaleX(1.0078);transform-origin:0 0;-webkit-text-stroke:0.25px currentColor;">Công cụ</div>
<div class="t" style="left:1616.00px;top:201.07px;font-size:17.05px;color:#111;font-weight:400;font-family:'Liberation Sans',sans-serif;transform:scaleX(0.9742);transform-origin:0 0;-webkit-text-stroke:0.25px currentColor;">Kiểm kê</div>
<div class="t" style="left:1698.00px;top:201.07px;font-size:17.05px;color:#111;font-weight:400;font-family:'Liberation Sans',sans-serif;transform:scaleX(0.9757);transform-origin:0 0;-webkit-text-stroke:0.25px currentColor;">Thống kê cấp xã</div>
<div class="t" style="left:1842.60px;top:201.07px;font-size:17.05px;color:#111;font-weight:400;font-family:'Liberation Sans',sans-serif;transform:scaleX(0.9809);transform-origin:0 0;-webkit-text-stroke:0.25px currentColor;">Trợ giúp</div>
<div class="r" style="left:1926px;top:193px;width:38px;height:32px;overflow:hidden;"><div class="t" style="left:0.60px;top:8.07px;font-size:17.05px;color:#111;font-weight:400;font-family:'Liberation Sans',sans-serif;transform:scaleX(0.9835);transform-origin:0 0;-webkit-text-stroke:0.25px currentColor;">Plugins</div></div>
<div class="r" style="left:903px;top:225px;width:1061px;height:68px;background:#e3effc;"></div>
<div class="r" style="left:903px;top:293px;width:1061px;height:36px;background:#c4dcf7;"></div>
<div class="r" style="left:903px;top:329px;width:1061px;height:2px;background:#2a86dc;"></div>
<div class="r" style="left:908px;top:195px;width:89px;height:27px;background:linear-gradient(#fff3c8,#ffe9a6 50%,#fed777);border:1px solid #e2c378;"></div>
<div class="t" style="left:916.60px;top:201.47px;font-size:17.05px;color:#111;font-weight:400;font-family:'Liberation Sans',sans-serif;transform:scaleX(1.0217);transform-origin:0 0;-webkit-text-stroke:0.25px currentColor;">Hệ thống</div>
<div class="r" style="left:904px;top:191px;width:97.5px;height:34px;border:4px solid #e8202a;"></div>
<div class="r" style="left:906px;top:224px;width:322px;height:310px;background:#fcfcfc;border:1px solid #979797;box-shadow:3px 3px 3px rgba(0,0,0,.35);"></div>
<div class="r" style="left:910px;top:260px;width:38px;height:270px;background:#e9eef0;border-right:1.5px solid #d0d0d0;"></div>
<div class="r" style="left:918px;top:229px;width:305px;height:27px;background:linear-gradient(#fffbe8 0%,#ffefb0 30%,#ffd84f 55%,#ffe690 100%);"></div>
<div class="r" style="left:914px;top:226px;width:313px;height:33px;border:4px solid #e8202a;"></div>
<div class="t" style="left:958.00px;top:235.07px;font-size:17.05px;color:#1a1a40;font-weight:400;font-family:'Liberation Sans',sans-serif;transform:scaleX(0.9567);transform-origin:0 0;-webkit-text-stroke:0.25px currentColor;">Kết nối cơ sở dữ liệu</div>
<div class="t" style="left:958.00px;top:267.97px;font-size:17.05px;color:#28206e;font-weight:400;font-family:'Liberation Sans',sans-serif;transform:scaleX(0.9491);transform-origin:0 0;-webkit-text-stroke:0.25px currentColor;">Gộp cơ sở dữ liệu</div>
<div class="t" style="left:958.00px;top:301.27px;font-size:17.05px;color:#28206e;font-weight:400;font-family:'Liberation Sans',sans-serif;transform:scaleX(0.9600);transform-origin:0 0;-webkit-text-stroke:0.25px currentColor;">Cập nhật cơ sở dữ liệu</div>
<div class="t" style="left:958.00px;top:338.37px;font-size:17.05px;color:#28206e;font-weight:400;font-family:'Liberation Sans',sans-serif;transform:scaleX(1.0027);transform-origin:0 0;-webkit-text-stroke:0.25px currentColor;">Thiết lập đơn vị hành chính</div>
<div class="t" style="left:958.00px;top:371.27px;font-size:17.05px;color:#28206e;font-weight:400;font-family:'Liberation Sans',sans-serif;transform:scaleX(1.0089);transform-origin:0 0;-webkit-text-stroke:0.25px currentColor;">Quản lý danh mục</div>
<div class="t" style="left:958.00px;top:404.17px;font-size:17.05px;color:#28206e;font-weight:400;font-family:'Liberation Sans',sans-serif;transform:scaleX(1.0105);transform-origin:0 0;-webkit-text-stroke:0.25px currentColor;">Thông tin bản vẽ hiện thời</div>
<div class="t" style="left:958.00px;top:437.17px;font-size:17.05px;color:#28206e;font-weight:400;font-family:'Liberation Sans',sans-serif;transform:scaleX(1.0216);transform-origin:0 0;-webkit-text-stroke:0.25px currentColor;">Tuỳ chọn</div>
<div class="t" style="left:958.00px;top:470.07px;font-size:17.05px;color:#28206e;font-weight:400;font-family:'Liberation Sans',sans-serif;transform:scaleX(1.0094);transform-origin:0 0;-webkit-text-stroke:0.25px currentColor;">Thiết lập phiên bản phần mềm</div>
<div class="t" style="left:958.00px;top:505.77px;font-size:17.05px;color:#28206e;font-weight:400;font-family:'Liberation Sans',sans-serif;transform:scaleX(1.0092);transform-origin:0 0;-webkit-text-stroke:0.25px currentColor;">Thoát</div>
<div class="r" style="left:952px;top:326px;width:272px;height:2px;background:#d4d4d4;border-bottom:1px solid #fff;"></div>
<div class="r" style="left:952px;top:496px;width:272px;height:2px;background:#d4d4d4;border-bottom:1px solid #fff;"></div>
<svg class="r" style="left:1207px;top:374px;" width="6" height="10" viewBox="0 0 6 10"><path d="M0 0L6 5L0 10z" fill="#0f1a60"/></svg>
<svg class="r" style="left:1200px;top:280px;left:0;top:0;" width="800" height="60" viewBox="0 0 800 60"><path d="M1250 308q9-10 19 0q-9 10-19 0z" fill="none" stroke="#3a9ae8" stroke-width="2"/><circle cx="1259" cy="308" r="2.5" fill="#3a9ae8"/><path d="M1250 318L1268 298" stroke="#3a9ae8" stroke-width="2"/><path d="M1296 305l9-5l9 5l-9 5z" fill="none" stroke="#3a9ae8" stroke-width="1.5"/><path d="M1296 311l8 4M1296 316l8 4" stroke="#3a9ae8" stroke-width="1.5"/><path d="M1307 311l7 8M1314 311l-7 8" stroke="#e81818" stroke-width="2.4"/><circle cx="1350" cy="307" r="6.5" fill="#fff" stroke="#3a9ae8" stroke-width="2.2"/><path d="M1346 312l4 7l4-7" fill="#3a9ae8"/><ellipse cx="1350" cy="319" rx="7" ry="2.5" fill="none" stroke="#3a9ae8" stroke-width="2"/><rect x="1387" y="300" width="15" height="19" fill="#fafafa" stroke="#888" stroke-width="1.2"/><path d="M1390 304h9M1390 307h9M1390 310h9" stroke="#777" stroke-width="1"/><rect x="1389" y="313" width="6" height="4" fill="#40b040"/><circle cx="1403" cy="317" r="5" fill="#f08080"/><path d="M1400 314l6 6M1406 314l-6 6" stroke="#e02020" stroke-width="2"/><path d="M1426.5 300v22" stroke="#fff" stroke-width="1.5"/><rect x="1442" y="301" width="21" height="19" rx="2" fill="#eaf2fc" stroke="#3a6ad8" stroke-width="2"/><path d="M1446 307h12M1446 311h10M1446 315h7" stroke="#3a6ad8" stroke-width="1.5"/><path d="M1455 319l7-7l2 2l-7 7z" fill="#3a6ad8"/><rect x="1488" y="301" width="21" height="19" fill="#fff" stroke="#555" stroke-width="1.3"/><path d="M1492 311h5v-5h4v10" stroke="#555" stroke-width="1.2" fill="none"/><circle cx="1492" cy="311" r="1.5" fill="#e08030"/><circle cx="1497" cy="305" r="1.5" fill="#40a040"/><circle cx="1501" cy="316" r="1.5" fill="#3a6ad8"/><path d="M1534 302h21v19h-21z" fill="#3aa848"/><path d="M1534 321l12-12l9 12z" fill="#4a8af0"/><path d="M1534 314l8-5v-7h-8z" fill="#f4c430"/><path d="M1551 296q6 0 6 6q0 4-6 9q-6-5-6-9q0-6 6-6z" fill="#e83a30"/><circle cx="1551" cy="302" r="2" fill="#a02020"/><rect x="1580" y="300" width="20" height="21" rx="2" fill="#fff" stroke="#888" stroke-width="1.2"/><rect x="1585" y="301" width="10" height="19" fill="#90c030"/><path d="M1590 301v19" stroke="#c0e070" stroke-width="1.5"/><path d="M1627 320l14-14" stroke="#e09030" stroke-width="3"/><path d="M1637 302l8 8l3-3l-5-7z" fill="#777"/><path d="M1630 303l14 14" stroke="#555" stroke-width="3"/><circle cx="1629" cy="303" r="3" fill="none" stroke="#666" stroke-width="2"/><circle cx="1681" cy="311" r="9" fill="none" stroke="#e83a3a" stroke-width="4" stroke-dasharray="10 4"/><path d="M1676 306h10v6l-5 5l-5-5z" fill="#2a5a90"/><path d="M1686 304l6 4l-3 8" stroke="#2a6ab0" stroke-width="2.5" fill="none"/></svg>
<div class="r" style="left:33px;top:946px;width:1931px;height:48px;background:#f0f0f0;"></div>
<div class="r" style="left:33px;top:946px;width:588px;height:48px;background:linear-gradient(#fdfdfd 0%,#f4f4f4 45%,#e0e0e0 100%);border-radius:0 4px 4px 0;"></div>
<div class="r" style="left:626px;top:946px;width:260px;height:48px;background:linear-gradient(#fdfdfd 0%,#f4f4f4 45%,#e0e0e0 100%);border-radius:4px 0 0 4px;"></div>
<div class="r" style="left:887px;top:946px;width:258px;height:48px;background:linear-gradient(#fdfdfd 0%,#f4f4f4 45%,#e0e0e0 100%);border-radius:0 4px 4px 0;"></div>
<div class="r" style="left:33px;top:993px;width:1931px;height:2px;background:#c4c4c4;"></div>
<div class="r" style="left:33px;top:995px;width:1931px;height:26px;background:#f0f0f0;"></div>
<div class="r" style="left:33px;top:996px;width:300px;height:25px;overflow:hidden;"><div class="t" style="left:-9.50px;top:8.03px;font-size:16.5px;color:#222;font-weight:400;font-family:'Liberation Sans',sans-serif;transform:scaleX(0.9193);transform-origin:0 0;-webkit-text-stroke:0.25px currentColor;">Display complete</div></div>
<svg class="r" style="left:0px;top:0px;left:0;top:0;" width="2000" height="1125" viewBox="0 0 2000 1125"><circle cx="51.5" cy="969.5" r="13.5" fill="#a8a8a8"/><circle cx="51.5" cy="968" r="11" fill="#b8b8b8"/><path d="M58 969.5h-13M51 963l-6.5 6.5l6.5 6.5" stroke="#fff" stroke-width="3" fill="none"/><circle cx="113.5" cy="969.5" r="13.5" fill="#a8a8a8"/><circle cx="113.5" cy="968" r="11" fill="#b8b8b8"/><path d="M107 969.5h13M114 963l6.5 6.5l-6.5 6.5" stroke="#fff" stroke-width="3" fill="none"/><path d="M78.0 967.5h10l-5.0 5.0z" fill="#777"/><path d="M140.0 967.5h10l-5.0 5.0z" fill="#777"/><path d="M201.0 967.5h10l-5.0 5.0z" fill="#777"/><ellipse cx="175" cy="977" rx="14" ry="6" fill="none" stroke="#bbb" stroke-width="1.3"/><path d="M166 955l8 22l10-5" stroke="#999" stroke-width="1.5" fill="none"/><rect x="416" y="958" width="15" height="12" fill="#fff" stroke="#666" stroke-width="1.3"/><rect x="417" y="959" width="13" height="2" fill="#4a6ac0"/><rect x="429" y="963" width="16" height="13" fill="#f4f4fc" stroke="#666" stroke-width="1.3"/><rect x="430" y="964" width="14" height="2.5" fill="#8aa0e0"/><rect x="421" y="973" width="11" height="6" fill="#fff" stroke="#666" stroke-width="1.2"/><path d="M406.5 949v42M455.5 949v42" stroke="#c0c0c0" stroke-width="1.3"/><rect x="631" y="957.0" width="2" height="2.5" fill="#888"/><rect x="631" y="962.5" width="2" height="2.5" fill="#888"/><rect x="631" y="968.0" width="2" height="2.5" fill="#888"/><rect x="631" y="973.5" width="2" height="2.5" fill="#888"/><rect x="631" y="979.0" width="2" height="2.5" fill="#888"/></svg>
<div class="r" style="left:460px;top:957px;width:18px;height:26px;background:linear-gradient(#fbd08a,#ffe9b0);border:1px solid #c8c8c8;"></div>
<div class="t" style="left:464.00px;top:961.17px;font-size:18.7px;color:#222;font-weight:400;font-family:'Liberation Sans',sans-serif;transform:scaleX(0.9614);transform-origin:0 0;-webkit-text-stroke:0.25px currentColor;">1</div>
<div class="r" style="left:479px;top:957px;width:19px;height:26px;background:linear-gradient(#f8f8f8,#e4e4e4);border:1px solid #c4c4c4;border-left:2px solid #222;"></div>
<div class="t" style="left:484.00px;top:961.17px;font-size:18.7px;color:#222;font-weight:400;font-family:'Liberation Sans',sans-serif;transform:scaleX(0.9614);transform-origin:0 0;-webkit-text-stroke:0.25px currentColor;">2</div>
<div class="r" style="left:499px;top:957px;width:19px;height:26px;background:linear-gradient(#f8f8f8,#e4e4e4);border:1px solid #c4c4c4;border-left:2px solid #222;"></div>
<div class="t" style="left:504.00px;top:961.17px;font-size:18.7px;color:#222;font-weight:400;font-family:'Liberation Sans',sans-serif;transform:scaleX(0.9614);transform-origin:0 0;-webkit-text-stroke:0.25px currentColor;">3</div>
<div class="r" style="left:519px;top:957px;width:19px;height:26px;background:linear-gradient(#f8f8f8,#e4e4e4);border:1px solid #c4c4c4;border-left:2px solid #222;"></div>
<div class="t" style="left:524.00px;top:961.17px;font-size:18.7px;color:#222;font-weight:400;font-family:'Liberation Sans',sans-serif;transform:scaleX(0.9614);transform-origin:0 0;-webkit-text-stroke:0.25px currentColor;">4</div>
<div class="r" style="left:539px;top:957px;width:19px;height:26px;background:linear-gradient(#f8f8f8,#e4e4e4);border:1px solid #c4c4c4;border-left:2px solid #222;"></div>
<div class="t" style="left:544.00px;top:961.17px;font-size:18.7px;color:#222;font-weight:400;font-family:'Liberation Sans',sans-serif;transform:scaleX(0.9614);transform-origin:0 0;-webkit-text-stroke:0.25px currentColor;">5</div>
<div class="r" style="left:559px;top:957px;width:19px;height:26px;background:linear-gradient(#f8f8f8,#e4e4e4);border:1px solid #c4c4c4;border-left:2px solid #222;"></div>
<div class="t" style="left:564.00px;top:961.17px;font-size:18.7px;color:#222;font-weight:400;font-family:'Liberation Sans',sans-serif;transform:scaleX(0.9614);transform-origin:0 0;-webkit-text-stroke:0.25px currentColor;">6</div>
<div class="r" style="left:579px;top:957px;width:19px;height:26px;background:linear-gradient(#f8f8f8,#e4e4e4);border:1px solid #c4c4c4;border-left:2px solid #222;"></div>
<div class="t" style="left:584.00px;top:961.17px;font-size:18.7px;color:#222;font-weight:400;font-family:'Liberation Sans',sans-serif;transform:scaleX(0.9614);transform-origin:0 0;-webkit-text-stroke:0.25px currentColor;">7</div>
<div class="r" style="left:599px;top:957px;width:19px;height:26px;background:linear-gradient(#f8f8f8,#e4e4e4);border:1px solid #c4c4c4;border-left:2px solid #222;"></div>
<div class="t" style="left:604.00px;top:961.17px;font-size:18.7px;color:#222;font-weight:400;font-family:'Liberation Sans',sans-serif;transform:scaleX(0.9614);transform-origin:0 0;-webkit-text-stroke:0.25px currentColor;">8</div>
<div class="r" style="left:218px;top:956px;width:183px;height:27px;background:#e6e6e6;border:1px solid #aaa;"></div>
<svg class="r" style="left:222px;top:960px;" width="24" height="18" viewBox="0 0 24 18"><rect x="1" y="1" width="12" height="10" fill="#fff" stroke="#555" stroke-width="1.2"/><rect x="8" y="6" width="14" height="10" fill="#fff" stroke="#555" stroke-width="1.2"/><rect x="9" y="7" width="12" height="2" fill="#7a9ae0"/></svg>
<div class="t" style="left:252.00px;top:962.57px;font-size:17.05px;color:#111;font-weight:400;font-family:'Liberation Sans',sans-serif;transform:scaleX(0.8926);transform-origin:0 0;-webkit-text-stroke:0.25px currentColor;">Model Views</div>
<svg class="r" style="left:381px;top:967px;" width="12" height="7" viewBox="0 0 12 7"><path d="M0 0H12L6 7z" fill="#111"/></svg>
<div class="t" style="left:651.00px;top:961.38px;font-size:22.0px;color:#111;font-weight:700;font-family:'Liberation Sans',sans-serif;transform:scaleX(1.1585);transform-origin:0 0;-webkit-text-stroke:0.25px currentColor;">X</div>
<div class="r" style="left:679px;top:959px;width:196px;height:23px;background:#fff;border:1px solid #aaa;"></div>
<div class="t" style="left:686.00px;top:962.57px;font-size:17.05px;color:#777;font-weight:400;font-family:'Liberation Sans',sans-serif;transform:scaleX(0.9040);transform-origin:0 0;-webkit-text-stroke:0.25px currentColor;">589749.8283</div>
<div class="t" style="left:901.00px;top:961.38px;font-size:22.0px;color:#111;font-weight:700;font-family:'Liberation Sans',sans-serif;transform:scaleX(1.0903);transform-origin:0 0;-webkit-text-stroke:0.25px currentColor;">Y</div>
<div class="r" style="left:927px;top:959px;width:195px;height:23px;background:#fff;border:1px solid #aaa;"></div>
<div class="t" style="left:933.00px;top:962.57px;font-size:17.05px;color:#777;font-weight:400;font-family:'Liberation Sans',sans-serif;transform:scaleX(0.9079);transform-origin:0 0;-webkit-text-stroke:0.25px currentColor;">2212231.9924</div>
<svg class="r" style="left:583px;top:995px;" width="6" height="26" viewBox="0 0 6 26"><rect x="1" y="2" width="2" height="2.5" fill="#999"/><rect x="1" y="7" width="2" height="2.5" fill="#999"/><rect x="1" y="12" width="2" height="2.5" fill="#999"/><rect x="1" y="17" width="2" height="2.5" fill="#999"/><rect x="1" y="22" width="2" height="2.5" fill="#999"/></svg>
<div class="r" style="left:593px;top:996px;width:38px;height:25px;border-left:1px solid #999;border-top:1px solid #999;"></div>
<svg class="r" style="left:619px;top:997px;" width="10" height="6" viewBox="0 0 10 6"><path d="M0 6L5 0L10 6z" fill="#111"/></svg>
<div class="r" style="left:1296px;top:995px;width:40px;height:26px;border-left:1.5px solid #a8a8a8;border-top:1.5px solid #a8a8a8;"></div>
<div class="r" style="left:1339px;top:995px;width:36px;height:26px;border-left:1.5px solid #a8a8a8;border-top:1.5px solid #a8a8a8;"></div>
<div class="r" style="left:1379px;top:995px;width:162px;height:26px;border-left:1.5px solid #a8a8a8;border-top:1.5px solid #a8a8a8;"></div>
<div class="r" style="left:1545px;top:995px;width:147px;height:26px;border-left:1.5px solid #a8a8a8;border-top:1.5px solid #a8a8a8;"></div>
<div class="r" style="left:1696px;top:995px;width:36px;height:26px;border-left:1.5px solid #a8a8a8;border-top:1.5px solid #a8a8a8;"></div>
<div class="r" style="left:1735px;top:995px;width:36px;height:26px;border-left:1.5px solid #a8a8a8;border-top:1.5px solid #a8a8a8;"></div>
<div class="r" style="left:1775px;top:995px;width:38px;height:26px;border-left:1.5px solid #a8a8a8;border-top:1.5px solid #a8a8a8;"></div>
<div class="r" style="left:1816px;top:995px;width:36px;height:26px;border-left:1.5px solid #a8a8a8;border-top:1.5px solid #a8a8a8;"></div>
<div class="r" style="left:1856px;top:995px;width:38px;height:26px;border-left:1.5px solid #a8a8a8;border-top:1.5px solid #a8a8a8;"></div>
<div class="r" style="left:1897px;top:995px;width:36px;height:26px;border-left:1.5px solid #a8a8a8;border-top:1.5px solid #a8a8a8;"></div>
<div class="r" style="left:1937px;top:995px;width:27px;height:26px;border-left:1.5px solid #a8a8a8;border-top:1.5px solid #a8a8a8;"></div>
<div class="t" style="left:1382.00px;top:1004.57px;font-size:17.05px;color:#111;font-weight:400;font-family:'Liberation Sans',sans-serif;transform:scaleX(0.9094);transform-origin:0 0;-webkit-text-stroke:0.25px currentColor;">Level 3</div>
<svg class="r" style="left:1300px;top:998px;" width="30" height="20" viewBox="0 0 30 20"><path d="M7 15q6 0 8-4q2-4 6-6" stroke="#3a7ae8" stroke-width="1.6" fill="none"/><circle cx="7" cy="15" r="2" fill="#3a7ae8"/><circle cx="22" cy="5" r="2.2" fill="none" stroke="#3a7ae8" stroke-width="1.3"/><circle cx="14" cy="15" r="1.5" fill="#3a7ae8"/></svg>
<svg class="r" style="left:1345px;top:998px;" width="22" height="20" viewBox="0 0 22 20"><path d="M6 9v-3q0-4 5-4t5 4v3" stroke="#666" stroke-width="1.6" fill="none"/><rect x="3" y="9" width="16" height="9" fill="#c8b020"/></svg>
<svg class="r" style="left:1820px;top:998px;" width="26" height="22" viewBox="0 0 26 22"><path d="M4 3q4 3 8 0q4-3 8 0v14q-4-3-8 0q-4 3-8 0z" fill="none" stroke="#888" stroke-width="1.3"/><path d="M12 8q3 0 3 3t-3 3" stroke="#777" stroke-width="1.2" fill="none"/></svg>
<svg class="r" style="left:1940px;top:998px;" width="24" height="22" viewBox="0 0 24 22"><path d="M4 3h16l-1 16h-14z" fill="none" stroke="#999" stroke-width="1.3"/><path d="M8 7h9v9h-9z" fill="#ddd" stroke="#888"/></svg>
<div class="r" style="left:19px;top:1040px;width:678px;height:67px;background:linear-gradient(#fedb97,#fdd588);border:1.5px solid #f2b700;border-radius:11px;"></div>
<div class="r" style="left:41px;top:1050px;width:47px;height:46px;background:#5b9bd5;border:2px solid #fff;box-shadow:1px 1px 0 #a8c8ec;"></div><svg class="r" style="left:41px;top:1050px;" width="47" height="46" viewBox="0 0 47 46"><path d="M9 22.5L17.5 31L35.5 11.5" stroke="#fff" stroke-width="5" fill="none" stroke-linejoin="miter"/><path d="M9 22.5L17.5 31L35.5 11.5" stroke="#5b9bd5" stroke-width="1.6" fill="none"/></svg>
<div class="t" style="left:99.50px;top:1054.87px;font-size:35px;color:#000;font-weight:400;font-family:'Liberation Sans',sans-serif;transform:scaleX(0.9552);transform-origin:0 0;text-shadow:1px 1px 2px rgba(0,0,0,.3);">Phone và Zalo và Viber: 036.3232.739</div>
<div class="r" style="left:783px;top:1038px;width:567px;height:67px;background:linear-gradient(#fedb97,#fdd588);border:1.5px solid #f2b700;border-radius:11px;"></div>
<div class="r" style="left:803px;top:1047px;width:47px;height:46px;background:#5b9bd5;border:2px solid #fff;box-shadow:1px 1px 0 #a8c8ec;"></div><svg class="r" style="left:803px;top:1047px;" width="47" height="46" viewBox="0 0 47 46"><path d="M9 22.5L17.5 31L35.5 11.5" stroke="#fff" stroke-width="5" fill="none" stroke-linejoin="miter"/><path d="M9 22.5L17.5 31L35.5 11.5" stroke="#5b9bd5" stroke-width="1.6" fill="none"/></svg>
<div class="t" style="left:861.00px;top:1052.87px;font-size:35px;color:#000;font-weight:400;font-family:'Liberation Sans',sans-serif;transform:scaleX(0.9699);transform-origin:0 0;text-shadow:1px 1px 2px rgba(0,0,0,.3);">datsach.net và datsach.com.vn</div>
<div class="r" style="left:1476px;top:1038px;width:496px;height:67px;background:linear-gradient(#fedb97,#fdd588);border:1.5px solid #f2b700;border-radius:11px;"></div>
<div class="r" style="left:1497px;top:1047px;width:47px;height:46px;background:#5b9bd5;border:2px solid #fff;box-shadow:1px 1px 0 #a8c8ec;"></div><svg class="r" style="left:1497px;top:1047px;" width="47" height="46" viewBox="0 0 47 46"><path d="M9 22.5L17.5 31L35.5 11.5" stroke="#fff" stroke-width="5" fill="none" stroke-linejoin="miter"/><path d="M9 22.5L17.5 31L35.5 11.5" stroke="#5b9bd5" stroke-width="1.6" fill="none"/></svg>
<div class="t" style="left:1553.00px;top:1051.87px;font-size:35px;color:#000;font-weight:400;font-family:'Liberation Sans',sans-serif;transform:scaleX(1.0039);transform-origin:0 0;text-shadow:1px 1px 2px rgba(0,0,0,.3);">youtube.com/@datsachtv</div>
</body></html>
